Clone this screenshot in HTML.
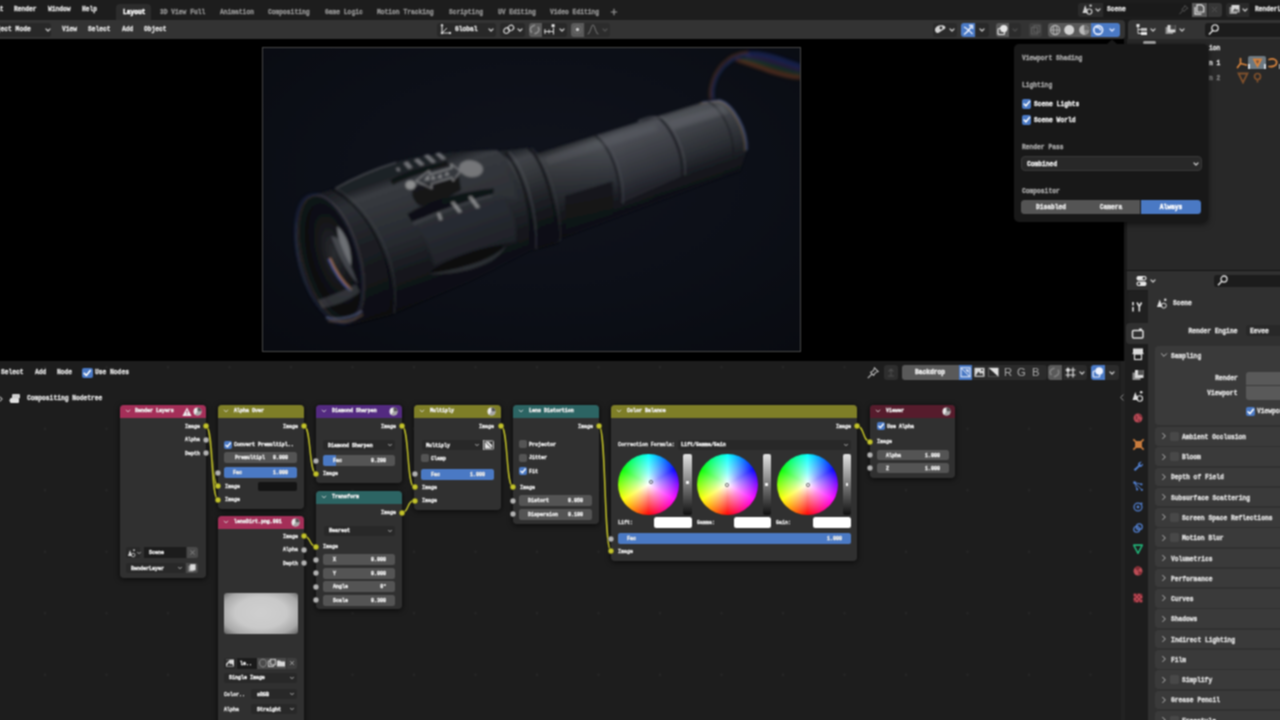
<!DOCTYPE html>
<html><head><meta charset="utf-8"><title>Blender</title>
<style>
html,body{margin:0;padding:0;background:#000;}
body{width:1280px;height:720px;overflow:hidden;position:relative;font-family:"Liberation Mono",monospace;}
#root{position:absolute;left:0;top:0;width:1280px;height:720px;overflow:hidden;background:#000;}
#wrap{position:absolute;left:0;top:0;width:1280px;height:720px;filter:url(#softblur);}
.b{position:absolute;display:block;}
.t{position:absolute;white-space:pre;font-family:"Liberation Mono",monospace;font-weight:bold;-webkit-text-stroke:0.45px currentColor;}
.ts{position:absolute;white-space:pre;font-family:"Liberation Sans",sans-serif;}
</style></head><body><svg width="0" height="0" style="position:absolute"><defs><filter id="softblur" x="0" y="0" width="100%" height="100%" color-interpolation-filters="sRGB"><feConvolveMatrix order="3" kernelMatrix="1 2 1 2 4 2 1 2 1" divisor="16" edgeMode="duplicate" preserveAlpha="true"/></filter></defs></svg><div id="root"><div id="wrap">
<div class="b" style="left:-6px;top:-6px;width:1292px;height:26px;background:#1d1d1d;"></div>
<div class="b" style="left:1118px;top:19px;width:14px;height:21px;background:#1a1a1a;"></div>
<div class="b" style="left:-6px;top:19.5px;width:1130.7px;height:19.5px;background:#333333;border-radius:0 4px 4px 0;"></div>
<div class="b" style="left:-6px;top:39px;width:1130px;height:322px;background:#000;"></div>
<div class="b" style="left:1124px;top:39px;width:3px;height:322px;background:#1a1a1a;"></div>
<div class="b" style="left:-6px;top:360.6px;width:1127px;height:366px;background:#1d1d1d;background-image:radial-gradient(circle,#282828 0.8px,rgba(40,40,40,0) 1.6px);background-size:61.5px 61.5px;background-position:20.25px 37px;"></div>
<div class="b" style="left:1121px;top:361px;width:3.5px;height:366px;background:#222222;"></div>
<div class="b" style="left:1127.5px;top:19.5px;width:160px;height:19.5px;background:#333333;border-radius:4px 0 0 0;"></div>
<div class="b" style="left:1126.5px;top:39px;width:160px;height:231px;background:#282828;"></div>
<div class="b" style="left:1124.5px;top:269.7px;width:162px;height:1.5px;background:#151515;"></div>
<div class="b" style="left:1126.5px;top:271px;width:160px;height:19px;background:#303030;"></div>
<div class="b" style="left:1124.5px;top:290px;width:162px;height:437px;background:#303030;"></div>
<div class="t" style="left:-4px;transform-origin:0 50%;top:4px;font-size:8px;line-height:10px;color:#dcdcdc;font-weight:bold;transform:scaleX(0.785);">it</div>
<div class="t" style="left:14px;transform-origin:0 50%;top:4px;font-size:8px;line-height:10px;color:#dcdcdc;font-weight:bold;transform:scaleX(0.785);">Render</div>
<div class="t" style="left:48px;transform-origin:0 50%;top:4px;font-size:8px;line-height:10px;color:#dcdcdc;font-weight:bold;transform:scaleX(0.785);">Window</div>
<div class="t" style="left:82px;transform-origin:0 50%;top:4px;font-size:8px;line-height:10px;color:#dcdcdc;font-weight:bold;transform:scaleX(0.785);">Help</div>
<div class="b" style="left:116.3px;top:4.4px;width:35.2px;height:15.2px;background:#2c2c2c;border-radius:4px 4px 0 0;"></div>
<div class="t" style="left:122.8px;transform-origin:0 50%;top:7px;font-size:8px;line-height:10px;color:#ffffff;font-weight:bold;transform:scaleX(0.785);">Layout</div>
<div class="t" style="left:160px;transform-origin:0 50%;top:7px;font-size:8px;line-height:10px;color:#8c8c8c;font-weight:bold;transform:scaleX(0.785);">3D View Full</div>
<div class="t" style="left:220px;transform-origin:0 50%;top:7px;font-size:8px;line-height:10px;color:#8c8c8c;font-weight:bold;transform:scaleX(0.785);">Animation</div>
<div class="t" style="left:268px;transform-origin:0 50%;top:7px;font-size:8px;line-height:10px;color:#8c8c8c;font-weight:bold;transform:scaleX(0.785);">Compositing</div>
<div class="t" style="left:324.7px;transform-origin:0 50%;top:7px;font-size:8px;line-height:10px;color:#8c8c8c;font-weight:bold;transform:scaleX(0.785);">Game Logic</div>
<div class="t" style="left:377px;transform-origin:0 50%;top:7px;font-size:8px;line-height:10px;color:#8c8c8c;font-weight:bold;transform:scaleX(0.785);">Motion Tracking</div>
<div class="t" style="left:448.7px;transform-origin:0 50%;top:7px;font-size:8px;line-height:10px;color:#8c8c8c;font-weight:bold;transform:scaleX(0.785);">Scripting</div>
<div class="t" style="left:498px;transform-origin:0 50%;top:7px;font-size:8px;line-height:10px;color:#8c8c8c;font-weight:bold;transform:scaleX(0.785);">UV Editing</div>
<div class="t" style="left:550px;transform-origin:0 50%;top:7px;font-size:8px;line-height:10px;color:#8c8c8c;font-weight:bold;transform:scaleX(0.785);">Video Editing</div>
<svg class="b" style="left:610px;top:8px;" width="8" height="8" viewBox="0 0 8 8"><path d="M4 0.8V7.2M0.8 4H7.2" stroke="#9a9a9a" stroke-width="1.1" fill="none"/></svg>
<div class="b" style="left:-4px;top:22.5px;width:55px;height:14px;background:#282828;border-radius:3px;"></div>
<div class="t" style="left:-6.8px;transform-origin:0 50%;top:24px;font-size:8px;line-height:10px;color:#dcdcdc;font-weight:bold;transform:scaleX(0.785);">bject Mode</div>
<svg class="b" style="left:43.5px;top:25.5px;" width="8" height="8" viewBox="0 0 8 8"><path d="M2.0 3.0 L4 5.0 L6.0 3.0" fill="none" stroke="#c8c8c8" stroke-width="1.2" stroke-linecap="round" stroke-linejoin="round"/></svg>
<div class="t" style="left:62px;transform-origin:0 50%;top:24px;font-size:8px;line-height:10px;color:#dcdcdc;font-weight:bold;transform:scaleX(0.785);">View</div>
<div class="t" style="left:88px;transform-origin:0 50%;top:24px;font-size:8px;line-height:10px;color:#dcdcdc;font-weight:bold;transform:scaleX(0.785);">Select</div>
<div class="t" style="left:122px;transform-origin:0 50%;top:24px;font-size:8px;line-height:10px;color:#dcdcdc;font-weight:bold;transform:scaleX(0.785);">Add</div>
<div class="t" style="left:144px;transform-origin:0 50%;top:24px;font-size:8px;line-height:10px;color:#dcdcdc;font-weight:bold;transform:scaleX(0.785);">Object</div>
<div class="b" style="left:437px;top:22.5px;width:59px;height:14px;background:#282828;border-radius:3px;"></div>
<svg class="b" style="left:439px;top:23px;" width="13" height="13" viewBox="0 0 13 13"><path d="M3 2V10H11" stroke="#d0d0d0" stroke-width="1.2" fill="none"/><path d="M3 10L8 5" stroke="#d0d0d0" stroke-width="1" fill="none"/><circle cx="3" cy="2.2" r="1.2" fill="#d0d0d0"/><circle cx="11" cy="10" r="1.2" fill="#d0d0d0"/><circle cx="3" cy="10" r="1.3" fill="#d0d0d0"/></svg>
<div class="t" style="left:455.4px;transform-origin:0 50%;top:24px;font-size:8px;line-height:10px;color:#dcdcdc;font-weight:bold;transform:scaleX(0.785);">Global</div>
<svg class="b" style="left:486.5px;top:25.5px;" width="8" height="8" viewBox="0 0 8 8"><path d="M2.0 3.0 L4 5.0 L6.0 3.0" fill="none" stroke="#c8c8c8" stroke-width="1.2" stroke-linecap="round" stroke-linejoin="round"/></svg>
<div class="b" style="left:500px;top:22.5px;width:25px;height:14px;background:#282828;border-radius:3px;"></div>
<svg class="b" style="left:502px;top:23px;" width="14" height="13" viewBox="0 0 14 13"><ellipse cx="4.6" cy="7.6" rx="3" ry="2.6" transform="rotate(-35 4.6 7.6)" stroke="#d0d0d0" stroke-width="1.2" fill="none"/><ellipse cx="8.8" cy="5" rx="3" ry="2.6" transform="rotate(-35 8.8 5)" stroke="#d0d0d0" stroke-width="1.2" fill="none"/></svg>
<svg class="b" style="left:515.5px;top:25.5px;" width="8" height="8" viewBox="0 0 8 8"><path d="M2.0 3.0 L4 5.0 L6.0 3.0" fill="none" stroke="#c8c8c8" stroke-width="1.2" stroke-linecap="round" stroke-linejoin="round"/></svg>
<div class="b" style="left:528.5px;top:22.5px;width:13px;height:14px;background:#595959;border-radius:3px 0 0 3px;"></div>
<svg class="b" style="left:529px;top:23px;" width="12" height="13" viewBox="0 0 12 13"><path d="M3 9.5A3.5 3.5 0 0 1 3 3.5L6 2M5.5 11L8.8 9.2A3.5 3.5 0 0 0 8.8 4" stroke="#8a8a8a" stroke-width="1.8" fill="none"/></svg>
<div class="b" style="left:542px;top:22.5px;width:25px;height:14px;background:#282828;border-radius:0 3px 3px 0;"></div>
<svg class="b" style="left:543px;top:23px;" width="14" height="13" viewBox="0 0 14 13"><path d="M1 8.5H11M2 6V11M6 6.5V10.5M10.5 5V11.5" stroke="#cfcfcf" stroke-width="1.1" fill="none"/><rect x="8.6" y="1.2" width="3" height="3" fill="#e6e6e6"/></svg>
<svg class="b" style="left:557.5px;top:25.5px;" width="8" height="8" viewBox="0 0 8 8"><path d="M2.0 3.0 L4 5.0 L6.0 3.0" fill="none" stroke="#c8c8c8" stroke-width="1.2" stroke-linecap="round" stroke-linejoin="round"/></svg>
<div class="b" style="left:571px;top:22.5px;width:13px;height:14px;background:#595959;border-radius:3px 0 0 3px;"></div>
<svg class="b" style="left:571px;top:23px;" width="13" height="13" viewBox="0 0 13 13"><circle cx="6.5" cy="6.5" r="1.7" fill="#c8c8c8"/><circle cx="6.5" cy="6.5" r="4" fill="none" stroke="#6e6e6e" stroke-width="0.8"/></svg>
<div class="b" style="left:585px;top:22.5px;width:25px;height:14px;background:#2c2c2c;border-radius:0 3px 3px 0;"></div>
<svg class="b" style="left:586px;top:23px;" width="14" height="13" viewBox="0 0 14 13"><path d="M1.5 11C4.5 11 5 2 7 2C9 2 9.5 11 12.5 11" stroke="#6c6c6c" stroke-width="1.1" fill="none"/></svg>
<svg class="b" style="left:600.5px;top:25.5px;" width="8" height="8" viewBox="0 0 8 8"><path d="M2.0 3.0 L4 5.0 L6.0 3.0" fill="none" stroke="#505050" stroke-width="1.2" stroke-linecap="round" stroke-linejoin="round"/></svg>
<div class="b" style="left:932.5px;top:22.5px;width:24px;height:14px;background:#2a2a2a;border-radius:3px;"></div>
<svg class="b" style="left:934px;top:23px;" width="13" height="13" viewBox="0 0 13 13"><path d="M1 6C2 2.5 6 1.5 9.5 2.5C12 3.4 12 5.5 10 6.2L5 9.5C3 11 0.5 9 1 6Z" fill="#d2d2d2"/><circle cx="7" cy="5" r="1.4" fill="#303030"/></svg>
<svg class="b" style="left:948px;top:25.5px;" width="8" height="8" viewBox="0 0 8 8"><path d="M2.0 3.0 L4 5.0 L6.0 3.0" fill="none" stroke="#c8c8c8" stroke-width="1.2" stroke-linecap="round" stroke-linejoin="round"/></svg>
<div class="b" style="left:961px;top:22.5px;width:14px;height:14px;background:#4a79c4;border-radius:3px 0 0 3px;"></div>
<svg class="b" style="left:961px;top:22.5px;" width="14" height="14" viewBox="0 0 14 14"><path d="M3 11.5C6 9.5 8.5 6.5 10.5 3.5" stroke="#e8eefc" stroke-width="1.5" fill="none"/><path d="M3 4C5.5 5 8 7.5 11.5 11" stroke="#e8eefc" stroke-width="1.3" fill="none"/><path d="M8 2.5H11.5V6" stroke="#e8eefc" stroke-width="1.3" fill="none"/></svg>
<div class="b" style="left:975.5px;top:22.5px;width:13px;height:14px;background:#282828;border-radius:0 3px 3px 0;"></div>
<svg class="b" style="left:978px;top:25.5px;" width="8" height="8" viewBox="0 0 8 8"><path d="M2.0 3.0 L4 5.0 L6.0 3.0" fill="none" stroke="#c8c8c8" stroke-width="1.2" stroke-linecap="round" stroke-linejoin="round"/></svg>
<div class="b" style="left:995.5px;top:22.5px;width:13px;height:14px;background:#595959;border-radius:3px 0 0 3px;"></div>
<svg class="b" style="left:995.5px;top:22.5px;" width="13" height="14" viewBox="0 0 13 14"><rect x="2" y="5.5" width="6.5" height="6" rx="1" fill="none" stroke="#e0e0e0" stroke-width="1.2"/><circle cx="7.8" cy="5.6" r="3.7" fill="#e6e6e6"/></svg>
<div class="b" style="left:1009px;top:22.5px;width:12px;height:14px;background:#2c2c2c;border-radius:0 3px 3px 0;"></div>
<svg class="b" style="left:1011px;top:25.5px;" width="8" height="8" viewBox="0 0 8 8"><path d="M2.0 3.0 L4 5.0 L6.0 3.0" fill="none" stroke="#4a4a4a" stroke-width="1.2" stroke-linecap="round" stroke-linejoin="round"/></svg>
<div class="b" style="left:1028.5px;top:22.5px;width:13px;height:14px;background:#3f3f3f;border-radius:3px;"></div>
<svg class="b" style="left:1028.5px;top:22.5px;" width="13" height="14" viewBox="0 0 13 14"><rect x="2.5" y="4.5" width="6" height="6.5" fill="none" stroke="#5e5e5e" stroke-width="1"/><rect x="4.8" y="2.6" width="6" height="6.5" fill="none" stroke="#5e5e5e" stroke-width="1"/></svg>
<div class="b" style="left:1048px;top:22.5px;width:43px;height:14px;background:#595959;border-radius:3px 0 0 3px;"></div>
<div class="b" style="left:1091px;top:22.5px;width:28.5px;height:14px;background:#4a79c4;border-radius:0 3px 3px 0;"></div>
<svg class="b" style="left:1048px;top:22.5px;" width="14.3" height="14" viewBox="0 0 14.3 14"><circle cx="7.2" cy="7" r="4.6" fill="none" stroke="#b4b4b4" stroke-width="1.1"/><ellipse cx="7.2" cy="7" rx="2" ry="4.6" fill="none" stroke="#b4b4b4" stroke-width="0.9"/><path d="M2.6 7H11.8" stroke="#b4b4b4" stroke-width="0.9"/></svg>
<svg class="b" style="left:1062.3px;top:22.5px;" width="14.3" height="14" viewBox="0 0 14.3 14"><circle cx="7.2" cy="7" r="5" fill="#d2d2d2"/></svg>
<svg class="b" style="left:1076.6px;top:22.5px;" width="14.3" height="14" viewBox="0 0 14.3 14"><circle cx="7.2" cy="7" r="5" fill="#b9b9b9"/><path d="M7.2 7V2A5 5 0 0 1 12.2 7Z" fill="#6a6a6a"/><path d="M7.2 7H12.2A5 5 0 0 1 8 11.9Z" fill="#8a8a8a"/></svg>
<svg class="b" style="left:1091px;top:22.5px;" width="14.3" height="14" viewBox="0 0 14.3 14"><circle cx="7.2" cy="7" r="4.4" fill="none" stroke="#eaf0ff" stroke-width="1.6"/><path d="M5 4.5C7 4 9.5 5 9.5 7.5" stroke="#eaf0ff" stroke-width="1.4" fill="none"/></svg>
<svg class="b" style="left:1108px;top:25.5px;" width="8" height="8" viewBox="0 0 8 8"><path d="M2.0 3.0 L4 5.0 L6.0 3.0" fill="none" stroke="#dfe8ff" stroke-width="1.2" stroke-linecap="round" stroke-linejoin="round"/></svg>
<div class="b" style="left:1078px;top:2.5px;width:25px;height:14.7px;background:#2a2a2a;border-radius:3px 0 0 3px;"></div>
<svg class="b" style="left:1080.5px;top:3px;" width="14" height="13" viewBox="0 0 14 13"><path d="M1.5 10L4.2 2L7 10Z" fill="#d0d0d0"/><circle cx="8.3" cy="8.6" r="2.6" fill="none" stroke="#d0d0d0" stroke-width="1.1"/><circle cx="9.6" cy="2.6" r="1.2" fill="#d0d0d0"/></svg>
<svg class="b" style="left:1093.5px;top:6.2px;" width="8" height="8" viewBox="0 0 8 8"><path d="M2.0 3.0 L4 5.0 L6.0 3.0" fill="none" stroke="#c8c8c8" stroke-width="1.2" stroke-linecap="round" stroke-linejoin="round"/></svg>
<div class="b" style="left:1103.5px;top:2.5px;width:87px;height:14.7px;background:#1a1a1a;"></div>
<div class="t" style="left:1107px;transform-origin:0 50%;top:4px;font-size:8px;line-height:10px;color:#dcdcdc;font-weight:bold;transform:scaleX(0.785);">Scene</div>
<svg class="b" style="left:1178px;top:3.5px;" width="11" height="12" viewBox="0 0 11 12"><path d="M7 1.5L9.8 4.3L7.5 5.5L6 7.5L3.8 5.3L5.8 3.8Z M4.8 6.4L1.5 10.2" stroke="#555" stroke-width="1" fill="none"/></svg>
<div class="b" style="left:1191.5px;top:2.5px;width:15.5px;height:14.7px;background:#595959;"></div>
<svg class="b" style="left:1192px;top:3px;" width="14" height="13" viewBox="0 0 14 13"><path d="M5 1.8H9.5L11.8 4V9H5Z" fill="none" stroke="#e0e0e0" stroke-width="1.2"/><path d="M3 4V11.2H9.5" fill="none" stroke="#e0e0e0" stroke-width="1.2"/></svg>
<div class="b" style="left:1207.5px;top:2.5px;width:14.5px;height:14.7px;background:#363636;border-radius:0 3px 3px 0;"></div>
<svg class="b" style="left:1209px;top:4px;" width="11" height="11" viewBox="0 0 11 11"><path d="M3 3L8 8M8 3L3 8" stroke="#505050" stroke-width="1"/></svg>
<div class="b" style="left:1226px;top:2.5px;width:23px;height:14.7px;background:#2a2a2a;border-radius:3px 0 0 3px;"></div>
<svg class="b" style="left:1228px;top:3px;" width="13" height="13" viewBox="0 0 13 13"><rect x="1.5" y="4" width="7.5" height="7" fill="#8c8c8c"/><rect x="3.5" y="2" width="8" height="7.4" fill="#d6d6d6"/><path d="M4.5 8.4L7 5.2L8.6 7L9.6 6L10.8 8.4Z" fill="#555"/></svg>
<svg class="b" style="left:1240.5px;top:6.2px;" width="8" height="8" viewBox="0 0 8 8"><path d="M2.0 3.0 L4 5.0 L6.0 3.0" fill="none" stroke="#c8c8c8" stroke-width="1.2" stroke-linecap="round" stroke-linejoin="round"/></svg>
<div class="b" style="left:1249.5px;top:2.5px;width:32px;height:14.7px;background:#1a1a1a;"></div>
<div class="t" style="left:1255px;transform-origin:0 50%;top:4px;font-size:8px;line-height:10px;color:#dcdcdc;font-weight:bold;transform:scaleX(0.785);">RenderLayer</div>
<svg class="b" style="left:262px;top:47px;" width="539" height="304" viewBox="262 47 539 304">
<defs>
<radialGradient id="bgv" cx="52%" cy="42%" r="75%">
<stop offset="0" stop-color="#10131c"/><stop offset="0.55" stop-color="#0c0f17"/><stop offset="1" stop-color="#090b11"/>
</radialGradient>
<linearGradient id="gTube" gradientUnits="userSpaceOnUse" x1="620" y1="126" x2="648" y2="212">
<stop offset="0" stop-color="#2a2d32"/><stop offset="0.08" stop-color="#54575d"/><stop offset="0.2" stop-color="#494c52"/><stop offset="0.38" stop-color="#3a3d43"/><stop offset="0.56" stop-color="#2c2f35"/><stop offset="0.72" stop-color="#1b1d23"/><stop offset="0.88" stop-color="#101218"/><stop offset="1" stop-color="#0b0d13"/>
</linearGradient>
<linearGradient id="gTubeFade" gradientUnits="userSpaceOnUse" x1="540" y1="0" x2="750" y2="0">
<stop offset="0" stop-color="#000" stop-opacity="0.25"/><stop offset="0.35" stop-color="#000" stop-opacity="0"/><stop offset="1" stop-color="#000" stop-opacity="0.1"/>
</linearGradient>
<linearGradient id="gHead" gradientUnits="userSpaceOnUse" x1="415" y1="168" x2="458" y2="290">
<stop offset="0" stop-color="#1e2025"/><stop offset="0.08" stop-color="#383b40"/><stop offset="0.28" stop-color="#2f3237"/><stop offset="0.5" stop-color="#26292e"/><stop offset="0.7" stop-color="#181a1f"/><stop offset="0.88" stop-color="#0e1015"/><stop offset="1" stop-color="#0a0c11"/>
</linearGradient>
<linearGradient id="gBezel" gradientUnits="userSpaceOnUse" x1="335" y1="190" x2="385" y2="318">
<stop offset="0" stop-color="#1b1d22"/><stop offset="0.15" stop-color="#2c2f34"/><stop offset="0.45" stop-color="#1d1f24"/><stop offset="0.8" stop-color="#101217"/><stop offset="1" stop-color="#0a0c10"/>
</linearGradient>
<linearGradient id="gNeck" gradientUnits="userSpaceOnUse" x1="515" y1="150" x2="548" y2="246">
<stop offset="0" stop-color="#22252a"/><stop offset="0.1" stop-color="#404348"/><stop offset="0.3" stop-color="#323539"/><stop offset="0.52" stop-color="#202227"/><stop offset="0.75" stop-color="#111318"/><stop offset="1" stop-color="#0a0c11"/>
</linearGradient>
<radialGradient id="gLens" cx="55%" cy="45%" r="60%">
<stop offset="0" stop-color="#2a2c30"/><stop offset="0.5" stop-color="#131418"/><stop offset="1" stop-color="#07080b"/>
</radialGradient>
<linearGradient id="gRainbow" x1="0" y1="0" x2="0" y2="1">
<stop offset="0" stop-color="#2a3cc0"/><stop offset="0.3" stop-color="#30a050"/><stop offset="0.55" stop-color="#c0a030"/><stop offset="0.8" stop-color="#c04030"/><stop offset="1" stop-color="#602040"/>
</linearGradient>
<filter id="bl1" x="-5%" y="-5%" width="110%" height="110%"><feGaussianBlur stdDeviation="0.9"/></filter>
<filter id="bl2" x="-10%" y="-10%" width="120%" height="120%"><feGaussianBlur stdDeviation="1.8"/></filter>
<filter id="bl3" x="-20%" y="-20%" width="140%" height="140%"><feGaussianBlur stdDeviation="3.5"/></filter>
<clipPath id="clipF"><rect x="262" y="47" width="539" height="304"/></clipPath>
</defs>
<rect x="262" y="47" width="539" height="304" fill="url(#bgv)"/>
<g clip-path="url(#clipF)">
<!-- soft shadow below body -->
<g filter="url(#bl1)">
<!-- lanyard -->
<g filter="url(#bl1)">
<path d="M710.5 99C708.5 88 713 74 722 64C729 56.5 738 52.5 748 52" fill="none" stroke="#c8703a" stroke-width="1.5" opacity=".42"/>
<path d="M713.5 99C711.5 88 716 75.5 724.5 66.5C731.5 59 740 55 750 54.5" fill="none" stroke="#3f62c8" stroke-width="1.8" opacity=".42"/>
<path d="M748 51.5C765 50 784 58 801 64L801 69.5C784 64 766 56 750 56Z" fill="#2a48c0" opacity=".3"/>
<path d="M746 55C764 55 784 64 801 69L801 72.5C784 68 765 60 745 58.5Z" fill="#6a4aa8" opacity=".26"/>
<path d="M742 57.5C762 59 782 69 801 72.5L801 75.5C782 73 762 64 740 60Z" fill="#2c8a48" opacity=".28"/>
<path d="M737 58.5C760 63 780 74 801 75.5L801 79.5C780 79 760 69 736 61.5Z" fill="#c0602e" opacity=".34"/>
</g>
<!-- tube -->
<path d="M528 156L702 102.3L720 100C734 104 748 130 747 150L740 171L717 179L557 240Z" fill="url(#gTube)"/>
<path d="M528 156L702 102.3L720 100C734 104 748 130 747 150L740 171L717 179L557 240Z" fill="url(#gTubeFade)"/>
<!-- knurl section slightly lighter/dotty -->
<path d="M597 135L657 116.5C670 125 684 152 682 176L620 204C622 176 610 146 597 135Z" fill="#4a4d53" opacity=".2"/>
<!-- ring lines on tube -->
<path d="M595 135.5C610 146 622 176 620 206" fill="none" stroke="#15171c" stroke-width="2" opacity=".8"/>
<path d="M598 134.5C613 145 625 175 623 204" fill="none" stroke="#5a5d63" stroke-width="1" opacity=".5"/>
<path d="M657 116.5C670 125 684 152 682 177" fill="none" stroke="#16181d" stroke-width="2.2" opacity=".85"/>
<path d="M660 115.5C673 124 687 151 685 175" fill="none" stroke="#62656b" stroke-width="1.1" opacity=".55"/>
<path d="M638 121C648 116.5 656 115 661 118.5" fill="none" stroke="#6a6d73" stroke-width="1.4" opacity=".6"/>
<!-- tail cap rim -->
<path d="M702 102.3L720 100C734 104 748 130 747 150" fill="none" stroke="#5a6ea8" stroke-width="1.6" opacity=".5"/>
<path d="M700 103.3L718 101C732 105 746 131 745 151" fill="none" stroke="#b08a5a" stroke-width="1.2" opacity=".4"/>
<path d="M708 101.5C722 108 735 134 733 157" fill="none" stroke="#17191e" stroke-width="2" opacity=".55"/>
<!-- tail highlight -->
<path d="M668 121.5L722 105L729 113L673 130Z" fill="#74777e" opacity=".32" filter="url(#bl2)"/><path d="M545 158L655 125L659 131L548 165Z" fill="#6a6d74" opacity=".2" filter="url(#bl2)"/>
<!-- label rectangle -->
<path d="M565 196L612.5 181.5L613.5 214L566 229.5Z" fill="#121419" opacity=".95"/>
<!-- neck -->
<path d="M496 151.5L530 147.5C546 160 560 210 558 243L529 251C531 215 518 170 496 151.5Z" fill="url(#gNeck)"/>
<path d="M505 153C521 168 534 213 532 250" fill="none" stroke="#0e1014" stroke-width="2.4" opacity=".8"/>
<path d="M509 151.8C525 167 538 212 536 249" fill="none" stroke="#5e6167" stroke-width="1.2" opacity=".5"/>
<path d="M528 148C544 160 558 210 556 243" fill="none" stroke="#101216" stroke-width="2.6" opacity=".85"/>
<path d="M532 147.5C548 160 562 208 560 241" fill="none" stroke="#4c4f55" stroke-width="1" opacity=".45"/>
<!-- head -->
<path d="M332 189.5C352 178 372 169 392 163C415 156 450 151 497 150C519 168 532 215 529 251L470 281L390 315C398 270 372 210 332 189.5Z" fill="url(#gHead)"/>
<!-- top edge highlight -->
<path d="M336 188C356 177 376 168.5 396 162.5" fill="none" stroke="#6a6d72" stroke-width="1.4" opacity=".55"/>
<!-- lit ridge areas -->
<path d="M440 176C460 168 480 160 498 158C508 170 515 185 518 200C500 196 470 200 445 210C440 200 440 186 440 176Z" fill="#34373c" opacity=".4" filter="url(#bl2)"/>
<path d="M414 220C440 206 475 198 497 196C512 204 518 225 516 242C500 243 465 252 434 266C430 250 424 234 414 220Z" fill="#2c2f34" opacity=".5" filter="url(#bl2)"/>
<!-- flutes (dark scallops) -->
<path d="M390 180C405 172 428 165 447 161L449 166C430 170 408 177 393 185Z" fill="#0b0d11" opacity=".8"/>
<path d="M414 186C430 184 448 180 459 176L461 190C450 197 436 203 420 206C412 200 410 192 414 186Z" fill="#0b0c11" opacity=".8"/>
<path d="M407.5 214C430 200 470 190 494 188.5L493 194C470 199 436 212 412 222Z" fill="#0c0e12" opacity=".9"/>
<path d="M412 222C436 212 470 199 493 194L492 197C470 203 438 215 414 226Z" fill="#45484d" opacity=".5"/>
<path d="M427 274C448 258 484 246 506 245C498 256 470 268 427 274Z" fill="#0b0d11" opacity=".9"/>
<path d="M427 274C470 268 498 256 506 245C502 260 470 276 427 274Z" fill="#34373c" opacity=".75"/>
<!-- grip bars near top -->
<path d="M396 168.5l2.6-1 1.8 3-2.6 1zM403.5 163l4-1.5 5 6-4 1.5zM414 160l4-1.4 6.5 5.8-4 1.4zM424 155.5l4-1.2 8 7.6-4 1.2zM435.5 153.5l4-1 6.5 6.2-4 1z" fill="#a0a2a6" opacity=".65"/>
<!-- logo -->
<path d="M416 181L429 170.5L430 174.5L452 168L451 164L460.5 171L453 181L452 177.5L431 184L432 188.5Z" fill="none" stroke="#cacaca" stroke-width="0.95" opacity=".72"/>
<path d="M424 180.5l4.5-6 1 5.5zM431 180l1.5-5 3.5 4zM437 178l4-4.5 1 4.5zM444 176l3-4.5 2.5 3.5z" fill="#c8c8c8" opacity=".55"/>
<ellipse cx="471" cy="168.7" rx="12" ry="8.3" transform="rotate(8 471 168.7)" fill="#808184" opacity=".85"/>
<ellipse cx="410.6" cy="185" rx="5.2" ry="4.5" fill="#b4b4b4" opacity=".7"/>
<!-- mode marks -->
<path d="M437 213.5l3-1 2.5 7-3 1zM450.6 202.5l3.4-1.2 8 10.5-3.4 1.2zM468 197l3.4-1.2 8.6 11.5-3.4 1.2z" fill="#bcbcbc" opacity=".62"/>
<!-- bezel ring -->
<path d="M309 196.5L332 189.5C372 210 398 270 390 315L352 324.5C300 330 280 215 309 196.5Z" fill="url(#gBezel)"/>
<path d="M332 189.5C372 210 398 270 390 315" fill="none" stroke="#0c0e12" stroke-width="2.2" opacity=".8"/>
<path d="M336 188.5C376 209 402 269 394 313.5" fill="none" stroke="#4a4d52" stroke-width="1" opacity=".5"/>
<!-- front opening -->
<ellipse cx="330" cy="259" rx="29" ry="66" transform="rotate(-16 330 259)" fill="#101216"/>
<ellipse cx="333" cy="260" rx="24" ry="58" transform="rotate(-16 333 260)" fill="url(#gLens)"/>
<!-- inner reflector highlights -->
<path d="M337 226C347 234 352 250 351 266C344 256 338 242 337 226Z" fill="#a8abb0" opacity=".6"/>
<path d="M331 236C338 254 346 272 358 284C352 268 345 252 338 238Z" fill="#54575e" opacity=".7"/>
<path d="M330 258C336 272 345 284 352 290" fill="none" stroke="#c88a5a" stroke-width="1.6" opacity=".8"/>
<path d="M328.5 259C334.5 273 343.5 285 350.5 291" fill="none" stroke="#5a78d8" stroke-width="1.3" opacity=".7"/>
<path d="M318 300C330 296 346 290 356 284L360 292C350 300 336 306 322 308Z" fill="#4b4e54" opacity=".55"/>
<path d="M326 318C338 320 352 318 362 311" fill="none" stroke="#7a88b8" stroke-width="2" opacity=".5"/><path d="M328 321C340 323 354 321 363 314.5" fill="none" stroke="#b08a6a" stroke-width="1.4" opacity=".45"/>
<!-- rim chromatic edges -->
<ellipse cx="329" cy="259" rx="29.5" ry="66.5" transform="rotate(-16 329 259)" fill="none" stroke="#4a62b8" stroke-width="1.6" opacity=".28" filter="url(#bl1)"/>
<ellipse cx="331.5" cy="259" rx="28.5" ry="65.5" transform="rotate(-16 331.5 259)" fill="none" stroke="#9a7a5a" stroke-width="1.1" opacity=".25"/>
</g>
</g>
</svg>
<div class="b" style="left:261.7px;top:46.8px;width:539.4px;height:305.3px;background:transparent;border:1px solid #464646;box-sizing:border-box;"></div>
<div class="t" style="left:1px;transform-origin:0 50%;top:367px;font-size:8px;line-height:10px;color:#dcdcdc;font-weight:bold;transform:scaleX(0.785);">Select</div>
<div class="t" style="left:35px;transform-origin:0 50%;top:367px;font-size:8px;line-height:10px;color:#dcdcdc;font-weight:bold;transform:scaleX(0.785);">Add</div>
<div class="t" style="left:57px;transform-origin:0 50%;top:367px;font-size:8px;line-height:10px;color:#dcdcdc;font-weight:bold;transform:scaleX(0.785);">Node</div>
<div class="b" style="left:82.4px;top:367.5px;width:10.3px;height:10.3px;background:#4a79c4;border-radius:2px;"></div>
<svg class="b" style="left:82.4px;top:367.5px;" width="10.3" height="10.3" viewBox="0 0 10.3 10.3"><path d="M2.266 5.356000000000001 L4.3260000000000005 7.416 L8.24 2.575" fill="none" stroke="#fff" stroke-width="1.648" stroke-linecap="round" stroke-linejoin="round"/></svg>
<div class="t" style="left:95px;transform-origin:0 50%;top:367px;font-size:8px;line-height:10px;color:#dcdcdc;font-weight:bold;transform:scaleX(0.785);">Use Nodes</div>
<svg class="b" style="left:-3.5px;top:394.5px;" width="8" height="8" viewBox="0 0 8 8"><path d="M2.9 1.7999999999999998 L5.1 4 L2.9 6.2" fill="none" stroke="#b0b0b0" stroke-width="1.1" stroke-linecap="round" stroke-linejoin="round"/></svg>
<svg class="b" style="left:9px;top:393px;" width="12" height="11" viewBox="0 0 12 11"><rect x="1" y="5" width="9" height="5" rx="1.2" fill="#e0e0e0"/><rect x="3" y="1" width="8" height="4.5" rx="1.2" fill="#cfcfcf"/><circle cx="1.3" cy="7.5" r="1" fill="#e0e0e0"/></svg>
<div class="t" style="left:27.4px;transform-origin:0 50%;top:393px;font-size:8px;line-height:10px;color:#dcdcdc;font-weight:bold;transform:scaleX(0.785);">Compositing Nodetree</div>
<svg class="b" style="left:866px;top:365.5px;" width="14" height="14" viewBox="0 0 14 14"><path d="M8.5 1.8L12.2 5.5L9.4 6.6L7.6 9.4L4.6 6.4L7.4 4.6Z" fill="none" stroke="#b8b8b8" stroke-width="1.1"/><path d="M6 8L1.8 12.2" stroke="#b8b8b8" stroke-width="1.1"/></svg>
<div class="b" style="left:884px;top:365px;width:13.5px;height:14.5px;background:#2e2e2e;border-radius:3px;"></div>
<svg class="b" style="left:884px;top:365px;" width="13.5" height="14.5" viewBox="0 0 13.5 14.5"><path d="M4 11H10M7 11V4M4.5 6.5L7 4L9.5 6.5" stroke="#4a4a4a" stroke-width="1.1" fill="none"/></svg>
<div class="b" style="left:902px;top:365px;width:56.5px;height:14.5px;background:#595959;border-radius:3px 0 0 3px;"></div>
<div class="t" style="left:830px;width:200px;text-align:center;transform-origin:50% 50%;top:367px;font-size:8px;line-height:10px;color:#f0f0f0;font-weight:bold;transform:scaleX(0.785);">Backdrop</div>
<div class="b" style="left:958.5px;top:365px;width:13px;height:14.5px;background:#4a79c4;"></div>
<svg class="b" style="left:958.5px;top:365px;" width="13" height="14.5" viewBox="0 0 13 14.5"><rect x="2" y="2.8" width="9" height="9" fill="none" stroke="#e8eefc" stroke-width="1"/><path d="M2 2.8L11 11.8" stroke="#e8eefc" stroke-width="1"/><path d="M6 4.5L9.5 4.5L9.5 8Z" fill="#e8eefc"/></svg>
<div class="b" style="left:971.5px;top:365px;width:75px;height:14.5px;background:#2b2b2b;border-radius:0 3px 3px 0;"></div>
<svg class="b" style="left:973px;top:365px;" width="13" height="14.5" viewBox="0 0 13 14.5"><rect x="1.5" y="2.8" width="10" height="9" fill="#d8d8d8"/><path d="M2.5 10.8L5.5 6.5L7.5 9L9 7.5L10.5 10.8Z" fill="#3a3a3a"/><circle cx="9" cy="5" r="1" fill="#3a3a3a"/></svg>
<svg class="b" style="left:987px;top:365px;" width="13" height="14.5" viewBox="0 0 13 14.5"><rect x="1.5" y="2.8" width="10" height="9" fill="#e0e0e0"/><path d="M1.5 2.8L11.5 11.8H1.5Z" fill="#2a2a2a"/></svg>
<div class="ts" style="left:1003.5px;transform-origin:0 50%;top:365.75px;font-size:11.5px;line-height:13.5px;color:#a6a6a6;font-weight:normal;transform:scaleX(0.98);">R</div>
<div class="ts" style="left:1017.2px;transform-origin:0 50%;top:365.75px;font-size:11.5px;line-height:13.5px;color:#a6a6a6;font-weight:normal;transform:scaleX(0.98);">G</div>
<div class="ts" style="left:1031.8px;transform-origin:0 50%;top:365.75px;font-size:11.5px;line-height:13.5px;color:#a6a6a6;font-weight:normal;transform:scaleX(0.98);">B</div>
<div class="b" style="left:1048px;top:365px;width:14px;height:14.5px;background:#595959;border-radius:3px 0 0 3px;"></div>
<svg class="b" style="left:1048px;top:365px;" width="14" height="14.5" viewBox="0 0 14 14.5"><path d="M3.5 10A3.4 3.4 0 0 1 3.5 4.5L6.5 3M6 12L9.5 10A3.4 3.4 0 0 0 9.8 5" stroke="#7d7d7d" stroke-width="1.8" fill="none"/></svg>
<div class="b" style="left:1062.5px;top:365px;width:24px;height:14.5px;background:#2b2b2b;border-radius:0 3px 3px 0;"></div>
<svg class="b" style="left:1064px;top:365.5px;" width="13" height="13" viewBox="0 0 13 13"><path d="M4 1.5V11.5M9 1.5V11.5M1.5 4H11.5M1.5 9H11.5" stroke="#d8d8d8" stroke-width="1.2" fill="none"/><rect x="2.5" y="2.5" width="3" height="3" fill="#e6e6e6"/></svg>
<svg class="b" style="left:1078px;top:368.5px;" width="8" height="8" viewBox="0 0 8 8"><path d="M2.0 3.0 L4 5.0 L6.0 3.0" fill="none" stroke="#c8c8c8" stroke-width="1.2" stroke-linecap="round" stroke-linejoin="round"/></svg>
<div class="b" style="left:1090.5px;top:365px;width:14px;height:14.5px;background:#4a79c4;border-radius:3px 0 0 3px;"></div>
<svg class="b" style="left:1090.5px;top:365px;" width="14" height="14.5" viewBox="0 0 14 14.5"><rect x="2.2" y="6" width="6.5" height="6" rx="1" fill="none" stroke="#e8eefc" stroke-width="1.2"/><circle cx="8.2" cy="6" r="3.8" fill="#eef3ff"/></svg>
<div class="b" style="left:1105px;top:365px;width:13.5px;height:14.5px;background:#2b2b2b;border-radius:0 3px 3px 0;"></div>
<svg class="b" style="left:1107.5px;top:368.5px;" width="8" height="8" viewBox="0 0 8 8"><path d="M2.0 3.0 L4 5.0 L6.0 3.0" fill="none" stroke="#c8c8c8" stroke-width="1.2" stroke-linecap="round" stroke-linejoin="round"/></svg>
<svg class="b" style="left:1119px;top:393px;" width="6" height="9" viewBox="0 0 6 9"><path d="M4.5 1.5L1.5 4.5L4.5 7.5" stroke="#8a8a8a" stroke-width="1" fill="none"/></svg>
<div class="b" style="left:119.5px;top:405px;width:86.5px;height:172.5px;background:#303030;border-radius:4px;box-shadow:0 1px 5px 1px rgba(0,0,0,.55);"></div>
<div class="b" style="left:119.5px;top:405px;width:86.5px;height:12.5px;background:#a42f58;border-radius:4px 4px 0 0;"></div>
<svg class="b" style="left:123.7px;top:407.3px;" width="8" height="8" viewBox="0 0 8 8"><path d="M2.2 3.1 L4 4.9 L5.8 3.1" fill="none" stroke="#d8d8d8" stroke-width="0.9" stroke-linecap="round" stroke-linejoin="round"/></svg>
<div class="t" style="left:135.2px;transform-origin:0 50%;top:407px;font-size:6px;line-height:8px;color:#ececec;font-weight:bold;transform:scaleX(0.83);">Render Layers</div>
<svg class="b" style="left:192.5px;top:407px;" width="9" height="9" viewBox="0 0 9 9"><circle cx="4.5" cy="4.5" r="4" fill="#e8e8e8"/><path d="M4.5 4.5V0.5A4 4 0 0 1 8.5 4.5Z" fill="#555"/><path d="M4.5 4.5L2 7.6A4 4 0 0 0 8.5 4.5Z" fill="#8a8a8a" opacity=".7"/></svg>
<svg class="b" style="left:182px;top:406.5px;" width="10" height="9.5" viewBox="0 0 10 9.5"><path d="M5 0.6L9.6 9H0.4Z" fill="#ececec"/><path d="M5 3.4V6.2M5 7.2V8" stroke="#b03060" stroke-width="1.1"/></svg>
<div class="b" style="left:218px;top:405px;width:86px;height:103.5px;background:#303030;border-radius:4px;box-shadow:0 1px 5px 1px rgba(0,0,0,.55);"></div>
<div class="b" style="left:218px;top:405px;width:86px;height:12.5px;background:#7e7e27;border-radius:4px 4px 0 0;"></div>
<svg class="b" style="left:222.2px;top:407.3px;" width="8" height="8" viewBox="0 0 8 8"><path d="M2.2 3.1 L4 4.9 L5.8 3.1" fill="none" stroke="#d8d8d8" stroke-width="0.9" stroke-linecap="round" stroke-linejoin="round"/></svg>
<div class="t" style="left:233.7px;transform-origin:0 50%;top:407px;font-size:6px;line-height:8px;color:#ececec;font-weight:bold;transform:scaleX(0.83);">Alpha Over</div>
<div class="b" style="left:218px;top:516px;width:86px;height:210px;background:#303030;border-radius:4px 4px 0 0;box-shadow:0 1px 5px 1px rgba(0,0,0,.55);"></div>
<div class="b" style="left:218px;top:516px;width:86px;height:12.5px;background:#a42f58;border-radius:4px 4px 0 0;"></div>
<svg class="b" style="left:222.2px;top:518.3px;" width="8" height="8" viewBox="0 0 8 8"><path d="M2.2 3.1 L4 4.9 L5.8 3.1" fill="none" stroke="#d8d8d8" stroke-width="0.9" stroke-linecap="round" stroke-linejoin="round"/></svg>
<div class="t" style="left:233.7px;transform-origin:0 50%;top:518px;font-size:6px;line-height:8px;color:#ececec;font-weight:bold;transform:scaleX(0.83);">lensDirt.png.001</div>
<svg class="b" style="left:290.5px;top:518px;" width="9" height="9" viewBox="0 0 9 9"><circle cx="4.5" cy="4.5" r="4" fill="#e8e8e8"/><path d="M4.5 4.5V0.5A4 4 0 0 1 8.5 4.5Z" fill="#555"/><path d="M4.5 4.5L2 7.6A4 4 0 0 0 8.5 4.5Z" fill="#8a8a8a" opacity=".7"/></svg>
<div class="b" style="left:316px;top:405px;width:86px;height:78px;background:#303030;border-radius:4px;box-shadow:0 1px 5px 1px rgba(0,0,0,.55);"></div>
<div class="b" style="left:316px;top:405px;width:86px;height:12.5px;background:#532a80;border-radius:4px 4px 0 0;"></div>
<svg class="b" style="left:320.2px;top:407.3px;" width="8" height="8" viewBox="0 0 8 8"><path d="M2.2 3.1 L4 4.9 L5.8 3.1" fill="none" stroke="#d8d8d8" stroke-width="0.9" stroke-linecap="round" stroke-linejoin="round"/></svg>
<div class="t" style="left:331.7px;transform-origin:0 50%;top:407px;font-size:6px;line-height:8px;color:#ececec;font-weight:bold;transform:scaleX(0.83);">Diamond Sharpen</div>
<svg class="b" style="left:388.5px;top:407px;" width="9" height="9" viewBox="0 0 9 9"><circle cx="4.5" cy="4.5" r="4" fill="#e8e8e8"/><path d="M4.5 4.5V0.5A4 4 0 0 1 8.5 4.5Z" fill="#555"/><path d="M4.5 4.5L2 7.6A4 4 0 0 0 8.5 4.5Z" fill="#8a8a8a" opacity=".7"/></svg>
<div class="b" style="left:316px;top:491px;width:86px;height:118px;background:#303030;border-radius:4px;box-shadow:0 1px 5px 1px rgba(0,0,0,.55);"></div>
<div class="b" style="left:316px;top:491px;width:86px;height:12.5px;background:#2c6463;border-radius:4px 4px 0 0;"></div>
<svg class="b" style="left:320.2px;top:493.3px;" width="8" height="8" viewBox="0 0 8 8"><path d="M2.2 3.1 L4 4.9 L5.8 3.1" fill="none" stroke="#d8d8d8" stroke-width="0.9" stroke-linecap="round" stroke-linejoin="round"/></svg>
<div class="t" style="left:331.7px;transform-origin:0 50%;top:493px;font-size:6px;line-height:8px;color:#ececec;font-weight:bold;transform:scaleX(0.83);">Transform</div>
<div class="b" style="left:414px;top:405px;width:86.5px;height:104.5px;background:#303030;border-radius:4px;box-shadow:0 1px 5px 1px rgba(0,0,0,.55);"></div>
<div class="b" style="left:414px;top:405px;width:86.5px;height:12.5px;background:#7e7e27;border-radius:4px 4px 0 0;"></div>
<svg class="b" style="left:418.2px;top:407.3px;" width="8" height="8" viewBox="0 0 8 8"><path d="M2.2 3.1 L4 4.9 L5.8 3.1" fill="none" stroke="#d8d8d8" stroke-width="0.9" stroke-linecap="round" stroke-linejoin="round"/></svg>
<div class="t" style="left:429.7px;transform-origin:0 50%;top:407px;font-size:6px;line-height:8px;color:#ececec;font-weight:bold;transform:scaleX(0.83);">Multiply</div>
<svg class="b" style="left:487px;top:407px;" width="9" height="9" viewBox="0 0 9 9"><circle cx="4.5" cy="4.5" r="4" fill="#e8e8e8"/><path d="M4.5 4.5V0.5A4 4 0 0 1 8.5 4.5Z" fill="#555"/><path d="M4.5 4.5L2 7.6A4 4 0 0 0 8.5 4.5Z" fill="#8a8a8a" opacity=".7"/></svg>
<div class="b" style="left:513px;top:405px;width:86px;height:118.5px;background:#303030;border-radius:4px;box-shadow:0 1px 5px 1px rgba(0,0,0,.55);"></div>
<div class="b" style="left:513px;top:405px;width:86px;height:12.5px;background:#2c6463;border-radius:4px 4px 0 0;"></div>
<svg class="b" style="left:517.2px;top:407.3px;" width="8" height="8" viewBox="0 0 8 8"><path d="M2.2 3.1 L4 4.9 L5.8 3.1" fill="none" stroke="#d8d8d8" stroke-width="0.9" stroke-linecap="round" stroke-linejoin="round"/></svg>
<div class="t" style="left:528.7px;transform-origin:0 50%;top:407px;font-size:6px;line-height:8px;color:#ececec;font-weight:bold;transform:scaleX(0.83);">Lens Distortion</div>
<div class="b" style="left:611px;top:405px;width:246px;height:155.5px;background:#303030;border-radius:4px;box-shadow:0 1px 5px 1px rgba(0,0,0,.55);"></div>
<div class="b" style="left:611px;top:405px;width:246px;height:12.5px;background:#7e7e27;border-radius:4px 4px 0 0;"></div>
<svg class="b" style="left:615.2px;top:407.3px;" width="8" height="8" viewBox="0 0 8 8"><path d="M2.2 3.1 L4 4.9 L5.8 3.1" fill="none" stroke="#d8d8d8" stroke-width="0.9" stroke-linecap="round" stroke-linejoin="round"/></svg>
<div class="t" style="left:626.7px;transform-origin:0 50%;top:407px;font-size:6px;line-height:8px;color:#ececec;font-weight:bold;transform:scaleX(0.83);">Color Balance</div>
<div class="b" style="left:870px;top:405px;width:85px;height:72.5px;background:#303030;border-radius:4px;box-shadow:0 1px 5px 1px rgba(0,0,0,.55);"></div>
<div class="b" style="left:870px;top:405px;width:85px;height:12.5px;background:#561c2c;border-radius:4px 4px 0 0;"></div>
<svg class="b" style="left:874.2px;top:407.3px;" width="8" height="8" viewBox="0 0 8 8"><path d="M2.2 3.1 L4 4.9 L5.8 3.1" fill="none" stroke="#d8d8d8" stroke-width="0.9" stroke-linecap="round" stroke-linejoin="round"/></svg>
<div class="t" style="left:885.7px;transform-origin:0 50%;top:407px;font-size:6px;line-height:8px;color:#ececec;font-weight:bold;transform:scaleX(0.83);">Viewer</div>
<svg class="b" style="left:941.5px;top:407px;" width="9" height="9" viewBox="0 0 9 9"><circle cx="4.5" cy="4.5" r="4" fill="#e8e8e8"/><path d="M4.5 4.5V0.5A4 4 0 0 1 8.5 4.5Z" fill="#555"/><path d="M4.5 4.5L2 7.6A4 4 0 0 0 8.5 4.5Z" fill="#8a8a8a" opacity=".7"/></svg>
<svg class="b" style="left:0px;top:361px;" width="1121" height="359" viewBox="0 361 1121 359"><path d="M206 426 C213.2 426 210.8 486 218 486" stroke="#151515" stroke-width="2.6" fill="none" opacity=".8"/><path d="M206 426 C213.2 426 210.8 486 218 486" stroke="#c2c22a" stroke-width="1.5" fill="none"/><path d="M206 426 C213.2 426 210.8 499.5 218 499.5" stroke="#151515" stroke-width="2.6" fill="none" opacity=".8"/><path d="M206 426 C213.2 426 210.8 499.5 218 499.5" stroke="#c2c22a" stroke-width="1.5" fill="none"/><path d="M304 426 C311.2 426 308.8 473.5 316 473.5" stroke="#151515" stroke-width="2.6" fill="none" opacity=".8"/><path d="M304 426 C311.2 426 308.8 473.5 316 473.5" stroke="#c2c22a" stroke-width="1.5" fill="none"/><path d="M304 536 C311.2 536 308.8 546.5 316 546.5" stroke="#151515" stroke-width="2.6" fill="none" opacity=".8"/><path d="M304 536 C311.2 536 308.8 546.5 316 546.5" stroke="#c2c22a" stroke-width="1.5" fill="none"/><path d="M402 426 C409.2 426 406.8 487 414 487" stroke="#151515" stroke-width="2.6" fill="none" opacity=".8"/><path d="M402 426 C409.2 426 406.8 487 414 487" stroke="#c2c22a" stroke-width="1.5" fill="none"/><path d="M402 512.5 C409.2 512.5 406.8 500.5 414 500.5" stroke="#151515" stroke-width="2.6" fill="none" opacity=".8"/><path d="M402 512.5 C409.2 512.5 406.8 500.5 414 500.5" stroke="#c2c22a" stroke-width="1.5" fill="none"/><path d="M501 426 C508.2 426 505.8 487 513 487" stroke="#151515" stroke-width="2.6" fill="none" opacity=".8"/><path d="M501 426 C508.2 426 505.8 487 513 487" stroke="#c2c22a" stroke-width="1.5" fill="none"/><path d="M599 426 C606.2 426 603.8 551 611 551" stroke="#151515" stroke-width="2.6" fill="none" opacity=".8"/><path d="M599 426 C606.2 426 603.8 551 611 551" stroke="#c2c22a" stroke-width="1.5" fill="none"/><path d="M857 426 C864.55 426 862.45 441.5 870 441.5" stroke="#151515" stroke-width="2.6" fill="none" opacity=".8"/><path d="M857 426 C864.55 426 862.45 441.5 870 441.5" stroke="#c2c22a" stroke-width="1.5" fill="none"/></svg>
<div class="t" style="right:1080px;transform-origin:100% 50%;top:423px;font-size:6px;line-height:8px;color:#dedede;font-weight:bold;transform:scaleX(0.83);">Image</div>
<svg class="b" style="left:202px;top:422px;" width="8" height="8" viewBox="0 0 8 8"><circle cx="4" cy="4" r="3" fill="#c2c22a" stroke="#1a1a1a" stroke-width="0.5"/></svg>
<div class="t" style="right:1080px;transform-origin:100% 50%;top:436px;font-size:6px;line-height:8px;color:#dedede;font-weight:bold;transform:scaleX(0.83);">Alpha</div>
<svg class="b" style="left:202px;top:435.5px;" width="8" height="8" viewBox="0 0 8 8"><circle cx="4" cy="4" r="3" fill="#b2b2b2" stroke="#1a1a1a" stroke-width="0.5"/></svg>
<div class="t" style="right:1080px;transform-origin:100% 50%;top:450px;font-size:6px;line-height:8px;color:#dedede;font-weight:bold;transform:scaleX(0.83);">Depth</div>
<svg class="b" style="left:202px;top:449px;" width="8" height="8" viewBox="0 0 8 8"><circle cx="4" cy="4" r="3" fill="#b2b2b2" stroke="#1a1a1a" stroke-width="0.5"/></svg>
<div class="b" style="left:126px;top:547px;width:14px;height:11px;background:#282828;border-radius:2.5px 0 0 2.5px;"></div>
<svg class="b" style="left:127px;top:547.5px;" width="9" height="10" viewBox="0 0 9 10"><path d="M1 8L3 2L5 8Z" fill="#cfcfcf"/><circle cx="6.2" cy="7" r="1.8" fill="none" stroke="#cfcfcf" stroke-width="0.8"/><circle cx="7" cy="2.2" r="0.9" fill="#cfcfcf"/></svg>
<svg class="b" style="left:135px;top:549px;" width="8" height="8" viewBox="0 0 8 8"><path d="M2.5 3.25 L4 4.75 L5.5 3.25" fill="none" stroke="#c0c0c0" stroke-width="0.8" stroke-linecap="round" stroke-linejoin="round"/></svg>
<div class="b" style="left:144px;top:547px;width:42px;height:11px;background:#1c1c1c;"></div>
<div class="t" style="left:149px;transform-origin:0 50%;top:549px;font-size:6px;line-height:8px;color:#e0e0e0;font-weight:bold;transform:scaleX(0.83);">Scene</div>
<div class="b" style="left:187px;top:547px;width:11px;height:11px;background:#4a4a4a;border-radius:0 2.5px 2.5px 0;"></div>
<svg class="b" style="left:188px;top:548px;" width="9" height="9" viewBox="0 0 9 9"><path d="M2.5 2.5L6.5 6.5M6.5 2.5L2.5 6.5" stroke="#8a8a8a" stroke-width="0.9"/></svg>
<div class="b" style="left:126px;top:563px;width:59px;height:10px;background:#282828;border-radius:2.5px;"></div>
<div class="t" style="left:131px;transform-origin:0 50%;top:565px;font-size:6px;line-height:8px;color:#e6e6e6;font-weight:bold;transform:scaleX(0.83);">RenderLayer</div>
<svg class="b" style="left:176px;top:564.3px;" width="8" height="8" viewBox="0 0 8 8"><path d="M2.5 3.25 L4 4.75 L5.5 3.25" fill="none" stroke="#c0c0c0" stroke-width="0.9" stroke-linecap="round" stroke-linejoin="round"/></svg>
<div class="b" style="left:186px;top:563px;width:12px;height:10px;background:#4a4a4a;border-radius:0 2.5px 2.5px 0;"></div>
<svg class="b" style="left:187px;top:563px;" width="10" height="10" viewBox="0 0 10 10"><rect x="1.5" y="2.5" width="5" height="6" fill="#9a9a9a"/><rect x="3.2" y="1.2" width="5.4" height="6.2" fill="#dcdcdc"/></svg>
<div class="t" style="right:982px;transform-origin:100% 50%;top:423px;font-size:6px;line-height:8px;color:#dedede;font-weight:bold;transform:scaleX(0.83);">Image</div>
<svg class="b" style="left:300px;top:422px;" width="8" height="8" viewBox="0 0 8 8"><circle cx="4" cy="4" r="3" fill="#c2c22a" stroke="#1a1a1a" stroke-width="0.5"/></svg>
<div class="b" style="left:224px;top:440.5px;width:8px;height:8px;background:#4a79c4;border-radius:2px;"></div>
<svg class="b" style="left:224px;top:440.5px;" width="8" height="8" viewBox="0 0 8 8"><path d="M1.76 4.16 L3.36 5.76 L6.4 2.0" fill="none" stroke="#fff" stroke-width="1.28" stroke-linecap="round" stroke-linejoin="round"/></svg>
<div class="t" style="left:234px;transform-origin:0 50%;top:441px;font-size:6px;line-height:8px;color:#e6e6e6;font-weight:bold;transform:scaleX(0.83);">Convert Premultipl..</div>
<div class="b" style="left:224px;top:451.5px;width:73px;height:11.5px;background:#545454;border-radius:2.5px;"></div>
<div class="t" style="left:235px;transform-origin:0 50%;top:454px;font-size:6px;line-height:8px;color:#e6e6e6;font-weight:bold;transform:scaleX(0.83);">Premultipl</div>
<div class="t" style="right:991.5px;transform-origin:100% 50%;top:454px;font-size:6px;line-height:8px;color:#e6e6e6;font-weight:bold;transform:scaleX(0.83);">0.000</div>
<svg class="b" style="left:214px;top:468.5px;" width="8" height="8" viewBox="0 0 8 8"><circle cx="4" cy="4" r="3" fill="#b2b2b2" stroke="#1a1a1a" stroke-width="0.5"/></svg>
<div class="b" style="left:224px;top:466.5px;width:73px;height:11.5px;background:#545454;border-radius:2.5px;"></div>
<div class="b" style="left:224px;top:466.5px;width:73px;height:11.5px;background:#4a79c4;border-radius:2.5px;"></div>
<div class="t" style="left:233px;transform-origin:0 50%;top:469px;font-size:6px;line-height:8px;color:#e6e6e6;font-weight:bold;transform:scaleX(0.83);">Fac</div>
<div class="t" style="right:991.5px;transform-origin:100% 50%;top:469px;font-size:6px;line-height:8px;color:#e6e6e6;font-weight:bold;transform:scaleX(0.83);">1.000</div>
<div class="t" style="left:225px;transform-origin:0 50%;top:483px;font-size:6px;line-height:8px;color:#dedede;font-weight:bold;transform:scaleX(0.83);">Image</div>
<svg class="b" style="left:214px;top:482px;" width="8" height="8" viewBox="0 0 8 8"><circle cx="4" cy="4" r="3" fill="#c2c22a" stroke="#1a1a1a" stroke-width="0.5"/></svg>
<div class="b" style="left:257.5px;top:481.5px;width:39px;height:9px;background:#141414;border-radius:2px;"></div>
<div class="t" style="left:225px;transform-origin:0 50%;top:496px;font-size:6px;line-height:8px;color:#dedede;font-weight:bold;transform:scaleX(0.83);">Image</div>
<svg class="b" style="left:214px;top:495.5px;" width="8" height="8" viewBox="0 0 8 8"><circle cx="4" cy="4" r="3" fill="#c2c22a" stroke="#1a1a1a" stroke-width="0.5"/></svg>
<div class="t" style="right:982px;transform-origin:100% 50%;top:533px;font-size:6px;line-height:8px;color:#dedede;font-weight:bold;transform:scaleX(0.83);">Image</div>
<svg class="b" style="left:300px;top:532px;" width="8" height="8" viewBox="0 0 8 8"><circle cx="4" cy="4" r="3" fill="#c2c22a" stroke="#1a1a1a" stroke-width="0.5"/></svg>
<div class="t" style="right:982px;transform-origin:100% 50%;top:546px;font-size:6px;line-height:8px;color:#dedede;font-weight:bold;transform:scaleX(0.83);">Alpha</div>
<svg class="b" style="left:300px;top:545.5px;" width="8" height="8" viewBox="0 0 8 8"><circle cx="4" cy="4" r="3" fill="#b2b2b2" stroke="#1a1a1a" stroke-width="0.5"/></svg>
<div class="t" style="right:982px;transform-origin:100% 50%;top:560px;font-size:6px;line-height:8px;color:#dedede;font-weight:bold;transform:scaleX(0.83);">Depth</div>
<svg class="b" style="left:300px;top:559px;" width="8" height="8" viewBox="0 0 8 8"><circle cx="4" cy="4" r="3" fill="#b2b2b2" stroke="#1a1a1a" stroke-width="0.5"/></svg>
<div class="b" style="left:223.5px;top:593px;width:74px;height:41px;border-radius:3px;background:radial-gradient(ellipse 70% 76% at 50% 48%,#cfcfcf 0%,#c9c9c9 50%,#a8a8a8 78%,#5a5a5a 100%);"></div>
<div class="b" style="left:224px;top:657.5px;width:12px;height:11px;background:#282828;border-radius:2.5px 0 0 2.5px;"></div>
<svg class="b" style="left:225px;top:658px;" width="10" height="10" viewBox="0 0 10 10"><rect x="1" y="1.5" width="8" height="7" fill="#d8d8d8"/><path d="M1.5 8L4 4.5L5.5 6.5L6.6 5.5L8.5 8Z" fill="#333"/><path d="M1 1.5H5L1 6Z" fill="#333"/></svg>
<div class="b" style="left:236.5px;top:657.5px;width:20px;height:11px;background:#1a1a1a;"></div>
<div class="t" style="left:240px;transform-origin:0 50%;top:660px;font-size:6px;line-height:8px;color:#e6e6e6;font-weight:bold;transform:scaleX(0.83);">le..</div>
<div class="b" style="left:257px;top:657.5px;width:29px;height:11px;background:#4a4a4a;"></div>
<svg class="b" style="left:257.5px;top:658px;" width="10" height="10" viewBox="0 0 10 10"><path d="M5 1.2C7.5 1.2 8.5 3 8.5 5C8.5 7.5 6.5 9 5 9C3.5 9 1.5 7.5 1.5 5C1.5 3 2.5 1.2 5 1.2Z" fill="none" stroke="#8f8f8f" stroke-width="0.9"/></svg>
<svg class="b" style="left:266.5px;top:658px;" width="10" height="10" viewBox="0 0 10 10"><rect x="1.5" y="3" width="5" height="5.5" fill="none" stroke="#d0d0d0" stroke-width="0.9"/><rect x="3.5" y="1.3" width="5" height="5.5" fill="#555" stroke="#d0d0d0" stroke-width="0.9"/></svg>
<svg class="b" style="left:276px;top:658px;" width="10" height="10" viewBox="0 0 10 10"><path d="M1 2.5H4L5 3.6H9V8.5H1Z" fill="#d8d8d8"/></svg>
<div class="b" style="left:286.5px;top:657.5px;width:10.5px;height:11px;background:#3e3e3e;border-radius:0 2.5px 2.5px 0;"></div>
<svg class="b" style="left:287px;top:658px;" width="10" height="10" viewBox="0 0 10 10"><path d="M3 3L7 7M7 3L3 7" stroke="#9a9a9a" stroke-width="0.9"/></svg>
<div class="b" style="left:224px;top:672.5px;width:73px;height:10px;background:#282828;border-radius:2.5px;"></div>
<div class="t" style="left:229px;transform-origin:0 50%;top:674px;font-size:6px;line-height:8px;color:#e6e6e6;font-weight:bold;transform:scaleX(0.83);">Single Image</div>
<svg class="b" style="left:288px;top:673.8px;" width="8" height="8" viewBox="0 0 8 8"><path d="M2.5 3.25 L4 4.75 L5.5 3.25" fill="none" stroke="#c0c0c0" stroke-width="0.9" stroke-linecap="round" stroke-linejoin="round"/></svg>
<div class="t" style="left:224px;transform-origin:0 50%;top:691px;font-size:6px;line-height:8px;color:#dcdcdc;font-weight:bold;transform:scaleX(0.83);">Color..</div>
<div class="b" style="left:251px;top:689px;width:46px;height:10px;background:#282828;border-radius:2.5px;"></div>
<div class="t" style="left:257px;transform-origin:0 50%;top:691px;font-size:6px;line-height:8px;color:#e6e6e6;font-weight:bold;transform:scaleX(0.83);">sRGB</div>
<svg class="b" style="left:288px;top:690.3px;" width="8" height="8" viewBox="0 0 8 8"><path d="M2.5 3.25 L4 4.75 L5.5 3.25" fill="none" stroke="#c0c0c0" stroke-width="0.9" stroke-linecap="round" stroke-linejoin="round"/></svg>
<div class="t" style="left:224px;transform-origin:0 50%;top:706px;font-size:6px;line-height:8px;color:#dcdcdc;font-weight:bold;transform:scaleX(0.83);">Alpha</div>
<div class="b" style="left:251px;top:704px;width:46px;height:10px;background:#282828;border-radius:2.5px;"></div>
<div class="t" style="left:257px;transform-origin:0 50%;top:706px;font-size:6px;line-height:8px;color:#e6e6e6;font-weight:bold;transform:scaleX(0.83);">Straight</div>
<svg class="b" style="left:288px;top:705.3px;" width="8" height="8" viewBox="0 0 8 8"><path d="M2.5 3.25 L4 4.75 L5.5 3.25" fill="none" stroke="#c0c0c0" stroke-width="0.9" stroke-linecap="round" stroke-linejoin="round"/></svg>
<div class="t" style="right:884px;transform-origin:100% 50%;top:423px;font-size:6px;line-height:8px;color:#dedede;font-weight:bold;transform:scaleX(0.83);">Image</div>
<svg class="b" style="left:398px;top:422px;" width="8" height="8" viewBox="0 0 8 8"><circle cx="4" cy="4" r="3" fill="#c2c22a" stroke="#1a1a1a" stroke-width="0.5"/></svg>
<div class="b" style="left:323px;top:440px;width:72px;height:10px;background:#282828;border-radius:2.5px;"></div>
<div class="t" style="left:328px;transform-origin:0 50%;top:442px;font-size:6px;line-height:8px;color:#e6e6e6;font-weight:bold;transform:scaleX(0.83);">Diamond Sharpen</div>
<svg class="b" style="left:386px;top:441.3px;" width="8" height="8" viewBox="0 0 8 8"><path d="M2.5 3.25 L4 4.75 L5.5 3.25" fill="none" stroke="#c0c0c0" stroke-width="0.9" stroke-linecap="round" stroke-linejoin="round"/></svg>
<svg class="b" style="left:312px;top:456.5px;" width="8" height="8" viewBox="0 0 8 8"><circle cx="4" cy="4" r="3" fill="#b2b2b2" stroke="#1a1a1a" stroke-width="0.5"/></svg>
<div class="b" style="left:323px;top:454.5px;width:72px;height:11.5px;background:#545454;border-radius:2.5px;"></div>
<div class="b" style="left:323px;top:454.5px;width:12.96px;height:11.5px;background:#4a79c4;border-radius:2.5px 0 0 2.5px;"></div>
<div class="t" style="left:333px;transform-origin:0 50%;top:457px;font-size:6px;line-height:8px;color:#e6e6e6;font-weight:bold;transform:scaleX(0.83);">Fac</div>
<div class="t" style="right:893.5px;transform-origin:100% 50%;top:457px;font-size:6px;line-height:8px;color:#e6e6e6;font-weight:bold;transform:scaleX(0.83);">0.200</div>
<div class="t" style="left:323px;transform-origin:0 50%;top:470px;font-size:6px;line-height:8px;color:#dedede;font-weight:bold;transform:scaleX(0.83);">Image</div>
<svg class="b" style="left:312px;top:469.5px;" width="8" height="8" viewBox="0 0 8 8"><circle cx="4" cy="4" r="3" fill="#c2c22a" stroke="#1a1a1a" stroke-width="0.5"/></svg>
<div class="t" style="right:884px;transform-origin:100% 50%;top:509px;font-size:6px;line-height:8px;color:#dedede;font-weight:bold;transform:scaleX(0.83);">Image</div>
<svg class="b" style="left:398px;top:508.5px;" width="8" height="8" viewBox="0 0 8 8"><circle cx="4" cy="4" r="3" fill="#c2c22a" stroke="#1a1a1a" stroke-width="0.5"/></svg>
<div class="b" style="left:324px;top:526px;width:71px;height:9.5px;background:#282828;border-radius:2.5px;"></div>
<div class="t" style="left:329px;transform-origin:0 50%;top:527px;font-size:6px;line-height:8px;color:#e6e6e6;font-weight:bold;transform:scaleX(0.83);">Nearest</div>
<svg class="b" style="left:386px;top:527.05px;" width="8" height="8" viewBox="0 0 8 8"><path d="M2.5 3.25 L4 4.75 L5.5 3.25" fill="none" stroke="#c0c0c0" stroke-width="0.9" stroke-linecap="round" stroke-linejoin="round"/></svg>
<div class="t" style="left:323px;transform-origin:0 50%;top:543px;font-size:6px;line-height:8px;color:#dedede;font-weight:bold;transform:scaleX(0.83);">Image</div>
<svg class="b" style="left:312px;top:542.5px;" width="8" height="8" viewBox="0 0 8 8"><circle cx="4" cy="4" r="3" fill="#c2c22a" stroke="#1a1a1a" stroke-width="0.5"/></svg>
<svg class="b" style="left:312px;top:555.5px;" width="8" height="8" viewBox="0 0 8 8"><circle cx="4" cy="4" r="3" fill="#b2b2b2" stroke="#1a1a1a" stroke-width="0.5"/></svg>
<div class="b" style="left:323px;top:554px;width:72px;height:11px;background:#545454;border-radius:2.5px;"></div>
<div class="t" style="left:333px;transform-origin:0 50%;top:556px;font-size:6px;line-height:8px;color:#e6e6e6;font-weight:bold;transform:scaleX(0.83);">X</div>
<div class="t" style="right:893.5px;transform-origin:100% 50%;top:556px;font-size:6px;line-height:8px;color:#e6e6e6;font-weight:bold;transform:scaleX(0.83);">0.000</div>
<svg class="b" style="left:312px;top:569.05px;" width="8" height="8" viewBox="0 0 8 8"><circle cx="4" cy="4" r="3" fill="#b2b2b2" stroke="#1a1a1a" stroke-width="0.5"/></svg>
<div class="b" style="left:323px;top:567.55px;width:72px;height:11px;background:#545454;border-radius:2.5px;"></div>
<div class="t" style="left:333px;transform-origin:0 50%;top:570px;font-size:6px;line-height:8px;color:#e6e6e6;font-weight:bold;transform:scaleX(0.83);">Y</div>
<div class="t" style="right:893.5px;transform-origin:100% 50%;top:570px;font-size:6px;line-height:8px;color:#e6e6e6;font-weight:bold;transform:scaleX(0.83);">0.000</div>
<svg class="b" style="left:312px;top:582.6px;" width="8" height="8" viewBox="0 0 8 8"><circle cx="4" cy="4" r="3" fill="#b2b2b2" stroke="#1a1a1a" stroke-width="0.5"/></svg>
<div class="b" style="left:323px;top:581.1px;width:72px;height:11px;background:#545454;border-radius:2.5px;"></div>
<div class="t" style="left:333px;transform-origin:0 50%;top:583px;font-size:6px;line-height:8px;color:#e6e6e6;font-weight:bold;transform:scaleX(0.83);">Angle</div>
<div class="t" style="right:893.5px;transform-origin:100% 50%;top:583px;font-size:6px;line-height:8px;color:#e6e6e6;font-weight:bold;transform:scaleX(0.83);">0°</div>
<svg class="b" style="left:312px;top:596.15px;" width="8" height="8" viewBox="0 0 8 8"><circle cx="4" cy="4" r="3" fill="#b2b2b2" stroke="#1a1a1a" stroke-width="0.5"/></svg>
<div class="b" style="left:323px;top:594.65px;width:72px;height:11px;background:#545454;border-radius:2.5px;"></div>
<div class="t" style="left:333px;transform-origin:0 50%;top:597px;font-size:6px;line-height:8px;color:#e6e6e6;font-weight:bold;transform:scaleX(0.83);">Scale</div>
<div class="t" style="right:893.5px;transform-origin:100% 50%;top:597px;font-size:6px;line-height:8px;color:#e6e6e6;font-weight:bold;transform:scaleX(0.83);">0.300</div>
<div class="t" style="right:785.5px;transform-origin:100% 50%;top:423px;font-size:6px;line-height:8px;color:#dedede;font-weight:bold;transform:scaleX(0.83);">Image</div>
<svg class="b" style="left:496.5px;top:422px;" width="8" height="8" viewBox="0 0 8 8"><circle cx="4" cy="4" r="3" fill="#c2c22a" stroke="#1a1a1a" stroke-width="0.5"/></svg>
<div class="b" style="left:422px;top:440px;width:59.5px;height:10px;background:#282828;border-radius:2.5px;"></div>
<div class="t" style="left:426px;transform-origin:0 50%;top:442px;font-size:6px;line-height:8px;color:#e6e6e6;font-weight:bold;transform:scaleX(0.83);">Multiply</div>
<svg class="b" style="left:472.5px;top:441.3px;" width="8" height="8" viewBox="0 0 8 8"><path d="M2.5 3.25 L4 4.75 L5.5 3.25" fill="none" stroke="#c0c0c0" stroke-width="0.9" stroke-linecap="round" stroke-linejoin="round"/></svg>
<div class="b" style="left:482.5px;top:440px;width:11px;height:10px;background:#bdbdbd;border-radius:0 2.5px 2.5px 0;"></div>
<svg class="b" style="left:482.5px;top:440px;" width="11" height="10" viewBox="0 0 11 10"><rect x="1.5" y="1" width="8" height="8" fill="#e6e6e6" stroke="#2a2a2a" stroke-width="0.8"/><path d="M2 1.5L9 8.5" stroke="#2a2a2a" stroke-width="0.9"/><path d="M5.5 1.8H9V5Z" fill="#2a2a2a"/></svg>
<div class="b" style="left:420.5px;top:454px;width:8px;height:8px;background:#545454;border-radius:2px;"></div>
<div class="t" style="left:431px;transform-origin:0 50%;top:455px;font-size:6px;line-height:8px;color:#e6e6e6;font-weight:bold;transform:scaleX(0.83);">Clamp</div>
<svg class="b" style="left:410.5px;top:470px;" width="8" height="8" viewBox="0 0 8 8"><circle cx="4" cy="4" r="3" fill="#b2b2b2" stroke="#1a1a1a" stroke-width="0.5"/></svg>
<div class="b" style="left:421px;top:468.5px;width:73px;height:11px;background:#545454;border-radius:2.5px;"></div>
<div class="b" style="left:421px;top:468.5px;width:73px;height:11px;background:#4a79c4;border-radius:2.5px;"></div>
<div class="t" style="left:431px;transform-origin:0 50%;top:471px;font-size:6px;line-height:8px;color:#e6e6e6;font-weight:bold;transform:scaleX(0.83);">Fac</div>
<div class="t" style="right:794.5px;transform-origin:100% 50%;top:471px;font-size:6px;line-height:8px;color:#e6e6e6;font-weight:bold;transform:scaleX(0.83);">1.000</div>
<div class="t" style="left:421.5px;transform-origin:0 50%;top:484px;font-size:6px;line-height:8px;color:#dedede;font-weight:bold;transform:scaleX(0.83);">Image</div>
<svg class="b" style="left:410.5px;top:483px;" width="8" height="8" viewBox="0 0 8 8"><circle cx="4" cy="4" r="3" fill="#c2c22a" stroke="#1a1a1a" stroke-width="0.5"/></svg>
<div class="t" style="left:421.5px;transform-origin:0 50%;top:497px;font-size:6px;line-height:8px;color:#dedede;font-weight:bold;transform:scaleX(0.83);">Image</div>
<svg class="b" style="left:410.5px;top:496.5px;" width="8" height="8" viewBox="0 0 8 8"><circle cx="4" cy="4" r="3" fill="#c2c22a" stroke="#1a1a1a" stroke-width="0.5"/></svg>
<div class="t" style="right:687px;transform-origin:100% 50%;top:423px;font-size:6px;line-height:8px;color:#dedede;font-weight:bold;transform:scaleX(0.83);">Image</div>
<svg class="b" style="left:595px;top:422px;" width="8" height="8" viewBox="0 0 8 8"><circle cx="4" cy="4" r="3" fill="#c2c22a" stroke="#1a1a1a" stroke-width="0.5"/></svg>
<div class="b" style="left:519px;top:440.3px;width:8px;height:8px;background:#545454;border-radius:2px;"></div>
<div class="t" style="left:529px;transform-origin:0 50%;top:441px;font-size:6px;line-height:8px;color:#e6e6e6;font-weight:bold;transform:scaleX(0.83);">Projector</div>
<div class="b" style="left:519px;top:453.8px;width:8px;height:8px;background:#545454;border-radius:2px;"></div>
<div class="t" style="left:529px;transform-origin:0 50%;top:454px;font-size:6px;line-height:8px;color:#e6e6e6;font-weight:bold;transform:scaleX(0.83);">Jitter</div>
<div class="b" style="left:519px;top:467.3px;width:8px;height:8px;background:#4a79c4;border-radius:2px;"></div>
<svg class="b" style="left:519px;top:467.3px;" width="8" height="8" viewBox="0 0 8 8"><path d="M1.76 4.16 L3.36 5.76 L6.4 2.0" fill="none" stroke="#fff" stroke-width="1.28" stroke-linecap="round" stroke-linejoin="round"/></svg>
<div class="t" style="left:529px;transform-origin:0 50%;top:468px;font-size:6px;line-height:8px;color:#e6e6e6;font-weight:bold;transform:scaleX(0.83);">Fit</div>
<div class="t" style="left:520px;transform-origin:0 50%;top:484px;font-size:6px;line-height:8px;color:#dedede;font-weight:bold;transform:scaleX(0.83);">Image</div>
<svg class="b" style="left:509px;top:483px;" width="8" height="8" viewBox="0 0 8 8"><circle cx="4" cy="4" r="3" fill="#c2c22a" stroke="#1a1a1a" stroke-width="0.5"/></svg>
<svg class="b" style="left:509px;top:496.7px;" width="8" height="8" viewBox="0 0 8 8"><circle cx="4" cy="4" r="3" fill="#b2b2b2" stroke="#1a1a1a" stroke-width="0.5"/></svg>
<div class="b" style="left:519px;top:495.3px;width:73px;height:11px;background:#545454;border-radius:2.5px;"></div>
<div class="t" style="left:528px;transform-origin:0 50%;top:497px;font-size:6px;line-height:8px;color:#e6e6e6;font-weight:bold;transform:scaleX(0.83);">Distort</div>
<div class="t" style="right:696.5px;transform-origin:100% 50%;top:497px;font-size:6px;line-height:8px;color:#e6e6e6;font-weight:bold;transform:scaleX(0.83);">0.050</div>
<svg class="b" style="left:509px;top:510.3px;" width="8" height="8" viewBox="0 0 8 8"><circle cx="4" cy="4" r="3" fill="#b2b2b2" stroke="#1a1a1a" stroke-width="0.5"/></svg>
<div class="b" style="left:519px;top:509px;width:73px;height:11px;background:#545454;border-radius:2.5px;"></div>
<div class="t" style="left:528px;transform-origin:0 50%;top:511px;font-size:6px;line-height:8px;color:#e6e6e6;font-weight:bold;transform:scaleX(0.83);">Dispersion</div>
<div class="t" style="right:696.5px;transform-origin:100% 50%;top:511px;font-size:6px;line-height:8px;color:#e6e6e6;font-weight:bold;transform:scaleX(0.83);">0.100</div>
<div class="t" style="right:429px;transform-origin:100% 50%;top:423px;font-size:6px;line-height:8px;color:#dedede;font-weight:bold;transform:scaleX(0.83);">Image</div>
<svg class="b" style="left:853px;top:422px;" width="8" height="8" viewBox="0 0 8 8"><circle cx="4" cy="4" r="3" fill="#c2c22a" stroke="#1a1a1a" stroke-width="0.5"/></svg>
<div class="t" style="left:618px;transform-origin:0 50%;top:441px;font-size:6px;line-height:8px;color:#dcdcdc;font-weight:bold;transform:scaleX(0.83);">Correction Formula:</div>
<div class="b" style="left:677.5px;top:440px;width:173.5px;height:9.5px;background:#282828;border-radius:2.5px;"></div>
<div class="t" style="left:680.5px;transform-origin:0 50%;top:441px;font-size:6px;line-height:8px;color:#e6e6e6;font-weight:bold;transform:scaleX(0.83);">Lift/Gamma/Gain</div>
<svg class="b" style="left:842px;top:441.05px;" width="8" height="8" viewBox="0 0 8 8"><path d="M2.5 3.25 L4 4.75 L5.5 3.25" fill="none" stroke="#c0c0c0" stroke-width="0.9" stroke-linecap="round" stroke-linejoin="round"/></svg>
<div class="b" style="left:617.8px;top:454px;width:61px;height:61px;border-radius:50%;background:radial-gradient(circle,#fff 0%,rgba(255,255,255,.55) 28%,rgba(255,255,255,0) 72%),conic-gradient(from 180deg,#ff0000,#ffff00 16.6%,#00ff00 33.3%,#00ffff 50%,#0000ff 66.6%,#ff00ff 83.3%,#ff0000);"></div>
<svg class="b" style="left:647.8px;top:478.5px;" width="6" height="6" viewBox="0 0 6 6"><circle cx="3" cy="3" r="1.6" fill="none" stroke="#333" stroke-width="0.7"/></svg>
<div class="b" style="left:683.3px;top:454.3px;width:8.3px;height:60.7px;border-radius:2px;background:linear-gradient(#e2e2e2,#7a7a7a 50%,#101010);"></div>
<div class="b" style="left:686.25px;top:481.3px;width:2.4px;height:2.4px;background:#f0f0f0;"></div>
<div class="b" style="left:696.7px;top:454px;width:61px;height:61px;border-radius:50%;background:radial-gradient(circle,#fff 0%,rgba(255,255,255,.55) 28%,rgba(255,255,255,0) 72%),conic-gradient(from 180deg,#ff0000,#ffff00 16.6%,#00ff00 33.3%,#00ffff 50%,#0000ff 66.6%,#ff00ff 83.3%,#ff0000);"></div>
<svg class="b" style="left:724.2px;top:482px;" width="6" height="6" viewBox="0 0 6 6"><circle cx="3" cy="3" r="1.6" fill="none" stroke="#333" stroke-width="0.7"/></svg>
<div class="b" style="left:762.5px;top:454.3px;width:8.1px;height:60.7px;border-radius:2px;background:linear-gradient(#e2e2e2,#7a7a7a 50%,#101010);"></div>
<div class="b" style="left:765.35px;top:483.3px;width:2.4px;height:2.4px;background:#f0f0f0;"></div>
<div class="b" style="left:777.1px;top:454px;width:61px;height:61px;border-radius:50%;background:radial-gradient(circle,#fff 0%,rgba(255,255,255,.55) 28%,rgba(255,255,255,0) 72%),conic-gradient(from 180deg,#ff0000,#ffff00 16.6%,#00ff00 33.3%,#00ffff 50%,#0000ff 66.6%,#ff00ff 83.3%,#ff0000);"></div>
<svg class="b" style="left:804.6px;top:482px;" width="6" height="6" viewBox="0 0 6 6"><circle cx="3" cy="3" r="1.6" fill="none" stroke="#333" stroke-width="0.7"/></svg>
<div class="b" style="left:842.8px;top:454.3px;width:8.2px;height:60.7px;border-radius:2px;background:linear-gradient(#e2e2e2,#7a7a7a 50%,#101010);"></div>
<div class="b" style="left:845.7px;top:483.3px;width:2.4px;height:2.4px;background:#f0f0f0;"></div>
<div class="t" style="left:618px;transform-origin:0 50%;top:519px;font-size:6px;line-height:8px;color:#dcdcdc;font-weight:bold;transform:scaleX(0.83);">Lift:</div>
<div class="b" style="left:654.4px;top:517.3px;width:37.4px;height:11.2px;background:#ffffff;border-radius:2.5px;"></div>
<div class="t" style="left:697px;transform-origin:0 50%;top:519px;font-size:6px;line-height:8px;color:#dcdcdc;font-weight:bold;transform:scaleX(0.83);">Gamma:</div>
<div class="b" style="left:733.6px;top:517.3px;width:37.4px;height:11.2px;background:#ffffff;border-radius:2.5px;"></div>
<div class="t" style="left:776.4px;transform-origin:0 50%;top:519px;font-size:6px;line-height:8px;color:#dcdcdc;font-weight:bold;transform:scaleX(0.83);">Gain:</div>
<div class="b" style="left:813.4px;top:517.3px;width:37.4px;height:11.2px;background:#ffffff;border-radius:2.5px;"></div>
<svg class="b" style="left:607px;top:534.5px;" width="8" height="8" viewBox="0 0 8 8"><circle cx="4" cy="4" r="3" fill="#b2b2b2" stroke="#1a1a1a" stroke-width="0.5"/></svg>
<div class="b" style="left:618px;top:533px;width:233px;height:11px;background:#545454;border-radius:2.5px;"></div>
<div class="b" style="left:618px;top:533px;width:233px;height:11px;background:#4a79c4;border-radius:2.5px;"></div>
<div class="t" style="left:627px;transform-origin:0 50%;top:535px;font-size:6px;line-height:8px;color:#e6e6e6;font-weight:bold;transform:scaleX(0.83);">Fac</div>
<div class="t" style="right:437.5px;transform-origin:100% 50%;top:535px;font-size:6px;line-height:8px;color:#e6e6e6;font-weight:bold;transform:scaleX(0.83);">1.000</div>
<div class="t" style="left:618px;transform-origin:0 50%;top:548px;font-size:6px;line-height:8px;color:#dedede;font-weight:bold;transform:scaleX(0.83);">Image</div>
<svg class="b" style="left:607px;top:547.3px;" width="8" height="8" viewBox="0 0 8 8"><circle cx="4" cy="4" r="3" fill="#c2c22a" stroke="#1a1a1a" stroke-width="0.5"/></svg>
<div class="b" style="left:876.7px;top:422px;width:8px;height:8px;background:#4a79c4;border-radius:2px;"></div>
<svg class="b" style="left:876.7px;top:422px;" width="8" height="8" viewBox="0 0 8 8"><path d="M1.76 4.16 L3.36 5.76 L6.4 2.0" fill="none" stroke="#fff" stroke-width="1.28" stroke-linecap="round" stroke-linejoin="round"/></svg>
<div class="t" style="left:887px;transform-origin:0 50%;top:423px;font-size:6px;line-height:8px;color:#e6e6e6;font-weight:bold;transform:scaleX(0.83);">Use Alpha</div>
<div class="t" style="left:877px;transform-origin:0 50%;top:438px;font-size:6px;line-height:8px;color:#dedede;font-weight:bold;transform:scaleX(0.83);">Image</div>
<svg class="b" style="left:866px;top:437.5px;" width="8" height="8" viewBox="0 0 8 8"><circle cx="4" cy="4" r="3" fill="#c2c22a" stroke="#1a1a1a" stroke-width="0.5"/></svg>
<svg class="b" style="left:866px;top:451px;" width="8" height="8" viewBox="0 0 8 8"><circle cx="4" cy="4" r="3" fill="#b2b2b2" stroke="#1a1a1a" stroke-width="0.5"/></svg>
<div class="b" style="left:876.7px;top:450px;width:72.3px;height:10.3px;background:#545454;border-radius:2.5px;"></div>
<div class="t" style="left:885.7px;transform-origin:0 50%;top:452px;font-size:6px;line-height:8px;color:#e6e6e6;font-weight:bold;transform:scaleX(0.83);">Alpha</div>
<div class="t" style="right:339.5px;transform-origin:100% 50%;top:452px;font-size:6px;line-height:8px;color:#e6e6e6;font-weight:bold;transform:scaleX(0.83);">1.000</div>
<svg class="b" style="left:866px;top:464.3px;" width="8" height="8" viewBox="0 0 8 8"><circle cx="4" cy="4" r="3" fill="#b2b2b2" stroke="#1a1a1a" stroke-width="0.5"/></svg>
<div class="b" style="left:876.7px;top:463px;width:72.3px;height:10.3px;background:#545454;border-radius:2.5px;"></div>
<div class="t" style="left:885.7px;transform-origin:0 50%;top:465px;font-size:6px;line-height:8px;color:#e6e6e6;font-weight:bold;transform:scaleX(0.83);">Z</div>
<div class="t" style="right:339.5px;transform-origin:100% 50%;top:465px;font-size:6px;line-height:8px;color:#e6e6e6;font-weight:bold;transform:scaleX(0.83);">1.000</div>
<svg class="b" style="left:1135px;top:23px;" width="14" height="13" viewBox="0 0 14 13"><rect x="1.5" y="1" width="3" height="3" fill="#e0e0e0"/><path d="M3 4V10.5H6M3 6.5H6" stroke="#d0d0d0" stroke-width="1" fill="none"/><rect x="6" y="5" width="6" height="3" fill="#bdbdbd"/><rect x="6" y="9" width="6" height="3" fill="#e6e6e6"/></svg>
<svg class="b" style="left:1149px;top:25.5px;" width="8" height="8" viewBox="0 0 8 8"><path d="M2.0 3.0 L4 5.0 L6.0 3.0" fill="none" stroke="#c8c8c8" stroke-width="1.2" stroke-linecap="round" stroke-linejoin="round"/></svg>
<svg class="b" style="left:1164px;top:23px;" width="14" height="13" viewBox="0 0 14 13"><rect x="1.5" y="4" width="7.5" height="7" fill="#8c8c8c"/><rect x="3.5" y="2" width="8" height="7.4" fill="#d6d6d6"/><path d="M6.5 2V6.5H11.5V2Z" fill="#444"/></svg>
<svg class="b" style="left:1178px;top:25.5px;" width="8" height="8" viewBox="0 0 8 8"><path d="M2.0 3.0 L4 5.0 L6.0 3.0" fill="none" stroke="#c8c8c8" stroke-width="1.2" stroke-linecap="round" stroke-linejoin="round"/></svg>
<div class="b" style="left:1204.5px;top:22.5px;width:80px;height:14px;background:#1c1c1c;border-radius:3px 0 0 3px;"></div>
<svg class="b" style="left:1207px;top:23px;" width="13" height="13" viewBox="0 0 13 13"><circle cx="8" cy="5" r="3.2" fill="none" stroke="#d8d8d8" stroke-width="1.3"/><path d="M5.8 7.4L2 11.5" stroke="#d8d8d8" stroke-width="1.5"/></svg>
<div class="b" style="left:1143px;top:41px;width:13px;height:2.5px;background:#a8a8a8;border-radius:2px;"></div>
<div class="t" style="left:1208.5px;transform-origin:0 50%;top:43px;font-size:8px;line-height:10px;color:#dcdcdc;font-weight:bold;transform:scaleX(0.785);">ion</div>
<div class="t" style="left:1208.5px;transform-origin:0 50%;top:58px;font-size:8px;line-height:10px;color:#dcdcdc;font-weight:bold;transform:scaleX(0.785);">n 1</div>
<div class="t" style="left:1208.5px;transform-origin:0 50%;top:73px;font-size:8px;line-height:10px;color:#7d7d7d;font-weight:bold;transform:scaleX(0.785);">n 2</div>
<svg class="b" style="left:1236px;top:57px;" width="12" height="12" viewBox="0 0 12 12"><path d="M4.5 1.5V6.5L1.5 10.5M4.5 6.5L10.5 8" stroke="#d5823c" stroke-width="1.7" fill="none" stroke-linecap="round"/></svg>
<div class="b" style="left:1248px;top:56px;width:18px;height:13px;background:#6c7982;border-radius:2px;"></div>
<svg class="b" style="left:1250.5px;top:57px;" width="13" height="12" viewBox="0 0 13 12"><path d="M1.5 1.5H11.5L6.5 11Z" fill="#d5823c"/><path d="M4.8 3.6H8.2L6.5 7Z" fill="#6d5040"/></svg>
<div class="b" style="left:1248.3px;top:64px;width:1.4px;height:5px;background:#d0d8e0;"></div>
<div class="b" style="left:1264.3px;top:64px;width:1.4px;height:5px;background:#d0d8e0;"></div>
<svg class="b" style="left:1267px;top:57px;" width="12" height="12" viewBox="0 0 12 12"><path d="M2 2.5C7 1 10.5 3 9.5 6.5C8.8 9 5 10 2 9.5" stroke="#d5823c" stroke-width="1.7" fill="none" stroke-linecap="round"/></svg>
<div class="b" style="left:1279px;top:64px;width:1.4px;height:5px;background:#c8c8c8;"></div>
<svg class="b" style="left:1237px;top:72px;" width="12" height="12" viewBox="0 0 12 12"><path d="M1.5 1.5H10.5L6 10.5Z" fill="none" stroke="#7f502c" stroke-width="1.8"/></svg>
<svg class="b" style="left:1252px;top:72px;" width="11" height="12" viewBox="0 0 11 12"><circle cx="5.5" cy="4.5" r="3" fill="none" stroke="#7f502c" stroke-width="1.7"/><path d="M5.5 7.5V10.5" stroke="#7f502c" stroke-width="1.7"/></svg>
<svg class="b" style="left:1135px;top:275px;" width="14" height="12" viewBox="0 0 14 12"><rect x="1.5" y="1" width="10" height="4.5" rx="2" fill="#e6e6e6"/><rect x="1.5" y="6.5" width="10" height="4.5" rx="2" fill="#e6e6e6"/><circle cx="9" cy="3.2" r="1.3" fill="#303030"/><circle cx="4" cy="8.8" r="1.3" fill="#303030"/></svg>
<svg class="b" style="left:1148.5px;top:277px;" width="8" height="8" viewBox="0 0 8 8"><path d="M2.0 3.0 L4 5.0 L6.0 3.0" fill="none" stroke="#c8c8c8" stroke-width="1.2" stroke-linecap="round" stroke-linejoin="round"/></svg>
<div class="b" style="left:1213.5px;top:274.5px;width:70px;height:12.5px;background:#1c1c1c;border-radius:3px 0 0 3px;"></div>
<svg class="b" style="left:1215.5px;top:274px;" width="13" height="13" viewBox="0 0 13 13"><circle cx="8" cy="5" r="3" fill="none" stroke="#d8d8d8" stroke-width="1.3"/><path d="M5.8 7.2L2 11.2" stroke="#d8d8d8" stroke-width="1.5"/></svg>
<div class="b" style="left:1124.5px;top:289.7px;width:23.5px;height:437px;background:#1d1d1d;"></div>
<div class="b" style="left:1127.5px;top:291px;width:20.5px;height:32px;background:#202020;border-radius:4px 0 0 4px;"></div>
<div class="b" style="left:1126px;top:323px;width:22px;height:20.5px;background:#303030;border-radius:4px 0 0 4px;"></div>
<svg class="b" style="left:1130px;top:299px;" width="15" height="15" viewBox="0 0 15 15"><path d="M3 3V6.5M3 8V12.5" stroke="#dcdcdc" stroke-width="1.6"/><path d="M7 3.5L9.3 7.5V12.5M11.6 3.5L9.3 7.5" stroke="#dcdcdc" stroke-width="1.6" fill="none"/></svg>
<svg class="b" style="left:1131px;top:327px;" width="14" height="13" viewBox="0 0 14 13"><rect x="1.5" y="3.5" width="10.5" height="7.5" rx="1" fill="none" stroke="#dcdcdc" stroke-width="1.5"/><rect x="8" y="1.5" width="3" height="2" fill="#dcdcdc"/></svg>
<svg class="b" style="left:1131px;top:347px;" width="14" height="14" viewBox="0 0 14 14"><rect x="2" y="1.5" width="10" height="4.5" fill="#dcdcdc"/><rect x="3.5" y="7" width="7" height="5.5" fill="none" stroke="#dcdcdc" stroke-width="1.2"/><path d="M1.5 6.5H12.5" stroke="#dcdcdc" stroke-width="1.4"/></svg>
<svg class="b" style="left:1131px;top:368px;" width="14" height="14" viewBox="0 0 14 14"><rect x="1.5" y="4.5" width="8" height="7.5" fill="#8c8c8c"/><rect x="4" y="2" width="8.5" height="8" fill="#d6d6d6"/><path d="M7 2V7H12.5V2Z" fill="#555"/></svg>
<svg class="b" style="left:1131px;top:389px;" width="14" height="14" viewBox="0 0 14 14"><path d="M1.5 11L4.3 3L7.2 11Z" fill="#dcdcdc"/><circle cx="8.8" cy="9.5" r="2.7" fill="none" stroke="#dcdcdc" stroke-width="1.1"/><circle cx="10.2" cy="3.2" r="1.3" fill="#dcdcdc"/></svg>
<svg class="b" style="left:1131px;top:411px;transform:scale(.86);opacity:.92;" width="14" height="14" viewBox="0 0 14 14"><circle cx="7" cy="7" r="5.2" fill="#c24d59"/><path d="M4 4.5C6 5 6 7 4.5 8.5M8 3C9 5 11 5 11.5 6M7 9C8.5 9 9 10.5 8.5 12" stroke="#7a2a36" stroke-width="1.2" fill="none"/></svg>
<svg class="b" style="left:1130.5px;top:437px;transform:scale(.86);opacity:.92;" width="15" height="15" viewBox="0 0 15 15"><rect x="3.5" y="3.5" width="8" height="8" fill="#d98540"/><path d="M1.5 1.5L4.5 4.5M13.5 1.5L10.5 4.5M1.5 13.5L4.5 10.5M13.5 13.5L10.5 10.5" stroke="#d98540" stroke-width="1.8"/></svg>
<svg class="b" style="left:1131px;top:459px;transform:scale(.86);opacity:.92;" width="14" height="14" viewBox="0 0 14 14"><path d="M11.5 2.2A3.4 3.4 0 0 0 7.2 6.4L2 11.2L3.8 12.8L8.8 8A3.4 3.4 0 0 0 12.8 4L10.6 6L9 4.4Z" fill="#5586db"/></svg>
<svg class="b" style="left:1131px;top:479px;transform:scale(.86);opacity:.92;" width="14" height="14" viewBox="0 0 14 14"><path d="M3 3L11 5M3 3L6 11M3 3L11.5 11.5" stroke="#5586db" stroke-width="1.1" fill="none"/><circle cx="3" cy="3" r="1.6" fill="#5586db"/><circle cx="11" cy="5" r="1.3" fill="#5586db"/><circle cx="6" cy="11" r="1.3" fill="#5586db"/><circle cx="11.5" cy="11.5" r="1.3" fill="#5586db"/></svg>
<svg class="b" style="left:1131px;top:500px;transform:scale(.86);opacity:.92;" width="14" height="14" viewBox="0 0 14 14"><circle cx="7" cy="7" r="4.6" fill="none" stroke="#5586db" stroke-width="1.5"/><circle cx="7" cy="7" r="1.7" fill="#5586db"/><circle cx="11" cy="3" r="1.3" fill="#5586db"/></svg>
<svg class="b" style="left:1131px;top:521px;transform:scale(.86);opacity:.92;" width="14" height="14" viewBox="0 0 14 14"><circle cx="5.5" cy="8.5" r="3.4" fill="none" stroke="#5586db" stroke-width="1.5"/><circle cx="8.5" cy="5.5" r="3.4" fill="none" stroke="#5586db" stroke-width="1.5"/><circle cx="6" cy="8" r="1.2" fill="#5586db"/></svg>
<svg class="b" style="left:1131px;top:542px;transform:scale(.86);opacity:.92;" width="14" height="14" viewBox="0 0 14 14"><path d="M2 2.5H12L7 12Z" fill="none" stroke="#21bd7e" stroke-width="1.8" stroke-linejoin="round"/></svg>
<svg class="b" style="left:1131px;top:564px;transform:scale(.86);opacity:.92;" width="14" height="14" viewBox="0 0 14 14"><circle cx="7" cy="7" r="5.2" fill="#c8505a"/><path d="M7 7L3 3.5A5.2 5.2 0 0 1 10 2.8Z" fill="#8c3038"/><path d="M7 7L12 8.5A5.2 5.2 0 0 1 8 12.1Z" fill="#8c3038"/></svg>
<svg class="b" style="left:1131px;top:591px;transform:scale(.86);opacity:.92;" width="14" height="14" viewBox="0 0 14 14"><rect x="2" y="2" width="10" height="10" fill="#8c2f3a"/><path d="M2 2H4.5V4.5H2ZM7 2H9.5V4.5H7ZM4.5 4.5H7V7H4.5ZM9.5 4.5H12V7H9.5ZM2 7H4.5V9.5H2ZM7 7H9.5V9.5H7ZM4.5 9.5H7V12H4.5ZM9.5 9.5H12V12H9.5Z" fill="#cf525d"/></svg>
<svg class="b" style="left:1155.5px;top:297px;" width="13" height="12" viewBox="0 0 13 12"><path d="M1 10L3.7 2.5L6.5 10Z" fill="#dcdcdc"/><circle cx="7.8" cy="8.6" r="2.5" fill="none" stroke="#dcdcdc" stroke-width="1"/><circle cx="9.3" cy="2.8" r="1.2" fill="#dcdcdc"/></svg>
<div class="t" style="left:1173.3px;transform-origin:0 50%;top:298px;font-size:8px;line-height:10px;color:#dcdcdc;font-weight:bold;transform:scaleX(0.785);">Scene</div>
<div class="t" style="right:42.2px;transform-origin:100% 50%;top:326px;font-size:8px;line-height:10px;color:#dcdcdc;font-weight:bold;transform:scaleX(0.785);">Render Engine</div>
<div class="b" style="left:1245.5px;top:325px;width:40px;height:11px;background:#282828;border-radius:3px 0 0 3px;"></div>
<div class="t" style="left:1250px;transform-origin:0 50%;top:326px;font-size:8px;line-height:10px;color:#dcdcdc;font-weight:bold;transform:scaleX(0.785);">Eevee</div>
<div class="b" style="left:1154.5px;top:346px;width:130px;height:78.5px;background:#3a3a3a;border-radius:4px 0 0 4px;"></div>
<svg class="b" style="left:1159.5px;top:351px;" width="8" height="8" viewBox="0 0 8 8"><path d="M1.4 2.7 L4 5.3 L6.6 2.7" fill="none" stroke="#b8b8b8" stroke-width="1" stroke-linecap="round" stroke-linejoin="round"/></svg>
<div class="t" style="left:1170.5px;transform-origin:0 50%;top:351px;font-size:8px;line-height:10px;color:#dcdcdc;font-weight:bold;transform:scaleX(0.785);">Sampling</div>
<div class="t" style="right:42.5px;transform-origin:100% 50%;top:373px;font-size:8px;line-height:10px;color:#dcdcdc;font-weight:bold;transform:scaleX(0.785);">Render</div>
<div class="b" style="left:1245.5px;top:371.5px;width:40px;height:13px;background:#595959;border-radius:3px 0 0 0;"></div>
<div class="t" style="right:42.5px;transform-origin:100% 50%;top:388px;font-size:8px;line-height:10px;color:#dcdcdc;font-weight:bold;transform:scaleX(0.785);">Viewport</div>
<div class="b" style="left:1245.5px;top:385.5px;width:40px;height:14px;background:#595959;border-radius:0 0 0 3px;"></div>
<div class="b" style="left:1245.5px;top:406.8px;width:9.3px;height:9.3px;background:#4a79c4;border-radius:2px;"></div>
<svg class="b" style="left:1245.5px;top:406.8px;" width="9.3" height="9.3" viewBox="0 0 9.3 9.3"><path d="M2.0460000000000003 4.836 L3.906 6.696000000000001 L7.440000000000001 2.325" fill="none" stroke="#fff" stroke-width="1.488" stroke-linecap="round" stroke-linejoin="round"/></svg>
<div class="t" style="left:1257.3px;transform-origin:0 50%;top:406px;font-size:8px;line-height:10px;color:#dcdcdc;font-weight:bold;transform:scaleX(0.785);">Viewport Denoising</div>
<div class="b" style="left:1154.5px;top:427px;width:130px;height:18.6px;background:#3a3a3a;border-radius:4px 0 0 4px;"></div>
<svg class="b" style="left:1159.5px;top:432.3px;" width="8" height="8" viewBox="0 0 8 8"><path d="M2.7 1.4 L5.3 4 L2.7 6.6" fill="none" stroke="#b8b8b8" stroke-width="1" stroke-linecap="round" stroke-linejoin="round"/></svg>
<div class="b" style="left:1169.5px;top:431.8px;width:9.3px;height:9.3px;background:#484848;border-radius:2px;"></div>
<div class="t" style="left:1181.7px;transform-origin:0 50%;top:432px;font-size:8px;line-height:10px;color:#dcdcdc;font-weight:bold;transform:scaleX(0.785);">Ambient Occlusion</div>
<div class="b" style="left:1154.5px;top:447.27px;width:130px;height:18.6px;background:#3a3a3a;border-radius:4px 0 0 4px;"></div>
<svg class="b" style="left:1159.5px;top:452.57px;" width="8" height="8" viewBox="0 0 8 8"><path d="M2.7 1.4 L5.3 4 L2.7 6.6" fill="none" stroke="#b8b8b8" stroke-width="1" stroke-linecap="round" stroke-linejoin="round"/></svg>
<div class="b" style="left:1169.5px;top:452.07px;width:9.3px;height:9.3px;background:#484848;border-radius:2px;"></div>
<div class="t" style="left:1181.7px;transform-origin:0 50%;top:452px;font-size:8px;line-height:10px;color:#dcdcdc;font-weight:bold;transform:scaleX(0.785);">Bloom</div>
<div class="b" style="left:1154.5px;top:467.54px;width:130px;height:18.6px;background:#3a3a3a;border-radius:4px 0 0 4px;"></div>
<svg class="b" style="left:1159.5px;top:472.84px;" width="8" height="8" viewBox="0 0 8 8"><path d="M2.7 1.4 L5.3 4 L2.7 6.6" fill="none" stroke="#b8b8b8" stroke-width="1" stroke-linecap="round" stroke-linejoin="round"/></svg>
<div class="t" style="left:1170.5px;transform-origin:0 50%;top:472px;font-size:8px;line-height:10px;color:#dcdcdc;font-weight:bold;transform:scaleX(0.785);">Depth of Field</div>
<div class="b" style="left:1154.5px;top:487.81px;width:130px;height:18.6px;background:#3a3a3a;border-radius:4px 0 0 4px;"></div>
<svg class="b" style="left:1159.5px;top:493.11px;" width="8" height="8" viewBox="0 0 8 8"><path d="M2.7 1.4 L5.3 4 L2.7 6.6" fill="none" stroke="#b8b8b8" stroke-width="1" stroke-linecap="round" stroke-linejoin="round"/></svg>
<div class="t" style="left:1170.5px;transform-origin:0 50%;top:493px;font-size:8px;line-height:10px;color:#dcdcdc;font-weight:bold;transform:scaleX(0.785);">Subsurface Scattering</div>
<div class="b" style="left:1154.5px;top:508.08px;width:130px;height:18.6px;background:#3a3a3a;border-radius:4px 0 0 4px;"></div>
<svg class="b" style="left:1159.5px;top:513.38px;" width="8" height="8" viewBox="0 0 8 8"><path d="M2.7 1.4 L5.3 4 L2.7 6.6" fill="none" stroke="#b8b8b8" stroke-width="1" stroke-linecap="round" stroke-linejoin="round"/></svg>
<div class="b" style="left:1169.5px;top:512.88px;width:9.3px;height:9.3px;background:#484848;border-radius:2px;"></div>
<div class="t" style="left:1181.7px;transform-origin:0 50%;top:513px;font-size:8px;line-height:10px;color:#dcdcdc;font-weight:bold;transform:scaleX(0.785);">Screen Space Reflections</div>
<div class="b" style="left:1154.5px;top:528.35px;width:130px;height:18.6px;background:#3a3a3a;border-radius:4px 0 0 4px;"></div>
<svg class="b" style="left:1159.5px;top:533.65px;" width="8" height="8" viewBox="0 0 8 8"><path d="M2.7 1.4 L5.3 4 L2.7 6.6" fill="none" stroke="#b8b8b8" stroke-width="1" stroke-linecap="round" stroke-linejoin="round"/></svg>
<div class="b" style="left:1169.5px;top:533.15px;width:9.3px;height:9.3px;background:#484848;border-radius:2px;"></div>
<div class="t" style="left:1181.7px;transform-origin:0 50%;top:533px;font-size:8px;line-height:10px;color:#dcdcdc;font-weight:bold;transform:scaleX(0.785);">Motion Blur</div>
<div class="b" style="left:1154.5px;top:548.62px;width:130px;height:18.6px;background:#3a3a3a;border-radius:4px 0 0 4px;"></div>
<svg class="b" style="left:1159.5px;top:553.92px;" width="8" height="8" viewBox="0 0 8 8"><path d="M2.7 1.4 L5.3 4 L2.7 6.6" fill="none" stroke="#b8b8b8" stroke-width="1" stroke-linecap="round" stroke-linejoin="round"/></svg>
<div class="t" style="left:1170.5px;transform-origin:0 50%;top:554px;font-size:8px;line-height:10px;color:#dcdcdc;font-weight:bold;transform:scaleX(0.785);">Volumetrics</div>
<div class="b" style="left:1154.5px;top:568.89px;width:130px;height:18.6px;background:#3a3a3a;border-radius:4px 0 0 4px;"></div>
<svg class="b" style="left:1159.5px;top:574.19px;" width="8" height="8" viewBox="0 0 8 8"><path d="M2.7 1.4 L5.3 4 L2.7 6.6" fill="none" stroke="#b8b8b8" stroke-width="1" stroke-linecap="round" stroke-linejoin="round"/></svg>
<div class="t" style="left:1170.5px;transform-origin:0 50%;top:574px;font-size:8px;line-height:10px;color:#dcdcdc;font-weight:bold;transform:scaleX(0.785);">Performance</div>
<div class="b" style="left:1154.5px;top:589.16px;width:130px;height:18.6px;background:#3a3a3a;border-radius:4px 0 0 4px;"></div>
<svg class="b" style="left:1159.5px;top:594.46px;" width="8" height="8" viewBox="0 0 8 8"><path d="M2.7 1.4 L5.3 4 L2.7 6.6" fill="none" stroke="#b8b8b8" stroke-width="1" stroke-linecap="round" stroke-linejoin="round"/></svg>
<div class="t" style="left:1170.5px;transform-origin:0 50%;top:594px;font-size:8px;line-height:10px;color:#dcdcdc;font-weight:bold;transform:scaleX(0.785);">Curves</div>
<div class="b" style="left:1154.5px;top:609.43px;width:130px;height:18.6px;background:#3a3a3a;border-radius:4px 0 0 4px;"></div>
<svg class="b" style="left:1159.5px;top:614.73px;" width="8" height="8" viewBox="0 0 8 8"><path d="M2.7 1.4 L5.3 4 L2.7 6.6" fill="none" stroke="#b8b8b8" stroke-width="1" stroke-linecap="round" stroke-linejoin="round"/></svg>
<div class="t" style="left:1170.5px;transform-origin:0 50%;top:614px;font-size:8px;line-height:10px;color:#dcdcdc;font-weight:bold;transform:scaleX(0.785);">Shadows</div>
<div class="b" style="left:1154.5px;top:629.7px;width:130px;height:18.6px;background:#3a3a3a;border-radius:4px 0 0 4px;"></div>
<svg class="b" style="left:1159.5px;top:635px;" width="8" height="8" viewBox="0 0 8 8"><path d="M2.7 1.4 L5.3 4 L2.7 6.6" fill="none" stroke="#b8b8b8" stroke-width="1" stroke-linecap="round" stroke-linejoin="round"/></svg>
<div class="t" style="left:1170.5px;transform-origin:0 50%;top:635px;font-size:8px;line-height:10px;color:#dcdcdc;font-weight:bold;transform:scaleX(0.785);">Indirect Lighting</div>
<div class="b" style="left:1154.5px;top:649.97px;width:130px;height:18.6px;background:#3a3a3a;border-radius:4px 0 0 4px;"></div>
<svg class="b" style="left:1159.5px;top:655.27px;" width="8" height="8" viewBox="0 0 8 8"><path d="M2.7 1.4 L5.3 4 L2.7 6.6" fill="none" stroke="#b8b8b8" stroke-width="1" stroke-linecap="round" stroke-linejoin="round"/></svg>
<div class="t" style="left:1170.5px;transform-origin:0 50%;top:655px;font-size:8px;line-height:10px;color:#dcdcdc;font-weight:bold;transform:scaleX(0.785);">Film</div>
<div class="b" style="left:1154.5px;top:670.24px;width:130px;height:18.6px;background:#3a3a3a;border-radius:4px 0 0 4px;"></div>
<svg class="b" style="left:1159.5px;top:675.54px;" width="8" height="8" viewBox="0 0 8 8"><path d="M2.7 1.4 L5.3 4 L2.7 6.6" fill="none" stroke="#b8b8b8" stroke-width="1" stroke-linecap="round" stroke-linejoin="round"/></svg>
<div class="b" style="left:1169.5px;top:675.04px;width:9.3px;height:9.3px;background:#484848;border-radius:2px;"></div>
<div class="t" style="left:1181.7px;transform-origin:0 50%;top:675px;font-size:8px;line-height:10px;color:#dcdcdc;font-weight:bold;transform:scaleX(0.785);">Simplify</div>
<div class="b" style="left:1154.5px;top:690.51px;width:130px;height:18.6px;background:#3a3a3a;border-radius:4px 0 0 4px;"></div>
<svg class="b" style="left:1159.5px;top:695.81px;" width="8" height="8" viewBox="0 0 8 8"><path d="M2.7 1.4 L5.3 4 L2.7 6.6" fill="none" stroke="#b8b8b8" stroke-width="1" stroke-linecap="round" stroke-linejoin="round"/></svg>
<div class="t" style="left:1170.5px;transform-origin:0 50%;top:695px;font-size:8px;line-height:10px;color:#dcdcdc;font-weight:bold;transform:scaleX(0.785);">Grease Pencil</div>
<div class="b" style="left:1154.5px;top:710.78px;width:130px;height:18.6px;background:#3a3a3a;border-radius:4px 0 0 4px;"></div>
<svg class="b" style="left:1159.5px;top:716.08px;" width="8" height="8" viewBox="0 0 8 8"><path d="M2.7 1.4 L5.3 4 L2.7 6.6" fill="none" stroke="#b8b8b8" stroke-width="1" stroke-linecap="round" stroke-linejoin="round"/></svg>
<div class="b" style="left:1169.5px;top:715.58px;width:9.3px;height:9.3px;background:#484848;border-radius:2px;"></div>
<div class="t" style="left:1181.7px;transform-origin:0 50%;top:716px;font-size:8px;line-height:10px;color:#dcdcdc;font-weight:bold;transform:scaleX(0.785);">Freestyle</div>
<div class="b" style="left:1014px;top:44px;width:194px;height:177.7px;background:#181818;border-radius:5px;box-shadow:0 2px 6px rgba(0,0,0,.6);"></div>
<svg class="b" style="left:1106px;top:38.5px;" width="12" height="6" viewBox="0 0 12 6"><path d="M0 6L6 0.5L12 6Z" fill="#181818"/></svg>
<div class="t" style="left:1021.7px;transform-origin:0 50%;top:53px;font-size:8px;line-height:10px;color:#a0a0a0;font-weight:bold;transform:scaleX(0.785);">Viewport Shading</div>
<div class="t" style="left:1021.7px;transform-origin:0 50%;top:80px;font-size:8px;line-height:10px;color:#a0a0a0;font-weight:bold;transform:scaleX(0.785);">Lighting</div>
<div class="b" style="left:1021.5px;top:99px;width:9.5px;height:9.5px;background:#4a79c4;border-radius:2px;"></div>
<svg class="b" style="left:1021.5px;top:99px;" width="9.5" height="9.5" viewBox="0 0 9.5 9.5"><path d="M2.09 4.94 L3.9899999999999998 6.84 L7.6000000000000005 2.375" fill="none" stroke="#fff" stroke-width="1.52" stroke-linecap="round" stroke-linejoin="round"/></svg>
<div class="t" style="left:1033.9px;transform-origin:0 50%;top:99px;font-size:8px;line-height:10px;color:#e6e6e6;font-weight:bold;transform:scaleX(0.785);">Scene Lights</div>
<div class="b" style="left:1021.5px;top:115.2px;width:9.5px;height:9.5px;background:#4a79c4;border-radius:2px;"></div>
<svg class="b" style="left:1021.5px;top:115.2px;" width="9.5" height="9.5" viewBox="0 0 9.5 9.5"><path d="M2.09 4.94 L3.9899999999999998 6.84 L7.6000000000000005 2.375" fill="none" stroke="#fff" stroke-width="1.52" stroke-linecap="round" stroke-linejoin="round"/></svg>
<div class="t" style="left:1033.9px;transform-origin:0 50%;top:115px;font-size:8px;line-height:10px;color:#e6e6e6;font-weight:bold;transform:scaleX(0.785);">Scene World</div>
<div class="t" style="left:1021.7px;transform-origin:0 50%;top:142px;font-size:8px;line-height:10px;color:#a0a0a0;font-weight:bold;transform:scaleX(0.785);">Render Pass</div>
<div class="b" style="left:1020.5px;top:156px;width:181px;height:15px;background:#282828;border-radius:4px;border:1px solid #383838;box-sizing:border-box;"></div>
<div class="t" style="left:1027px;transform-origin:0 50%;top:159px;font-size:8px;line-height:10px;color:#e6e6e6;font-weight:bold;transform:scaleX(0.785);">Combined</div>
<svg class="b" style="left:1192px;top:160.2px;" width="8" height="8" viewBox="0 0 8 8"><path d="M2.0 3.0 L4 5.0 L6.0 3.0" fill="none" stroke="#c8c8c8" stroke-width="1.2" stroke-linecap="round" stroke-linejoin="round"/></svg>
<div class="t" style="left:1021.7px;transform-origin:0 50%;top:186px;font-size:8px;line-height:10px;color:#a0a0a0;font-weight:bold;transform:scaleX(0.785);">Compositor</div>
<div class="b" style="left:1020.5px;top:199.8px;width:60px;height:14.6px;background:#545454;border-radius:3.5px 0 0 3.5px;"></div>
<div class="b" style="left:1081.3px;top:199.8px;width:58.5px;height:14.6px;background:#545454;"></div>
<div class="b" style="left:1140.5px;top:199.8px;width:60.7px;height:14.6px;background:#4a79c4;border-radius:0 3.5px 3.5px 0;"></div>
<div class="t" style="left:951px;width:200px;text-align:center;transform-origin:50% 50%;top:202px;font-size:8px;line-height:10px;color:#e6e6e6;font-weight:bold;transform:scaleX(0.785);">Disabled</div>
<div class="t" style="left:1011px;width:200px;text-align:center;transform-origin:50% 50%;top:202px;font-size:8px;line-height:10px;color:#e6e6e6;font-weight:bold;transform:scaleX(0.785);">Camera</div>
<div class="t" style="left:1071px;width:200px;text-align:center;transform-origin:50% 50%;top:202px;font-size:8px;line-height:10px;color:#ffffff;font-weight:bold;transform:scaleX(0.785);">Always</div>
</div></div></body></html>
